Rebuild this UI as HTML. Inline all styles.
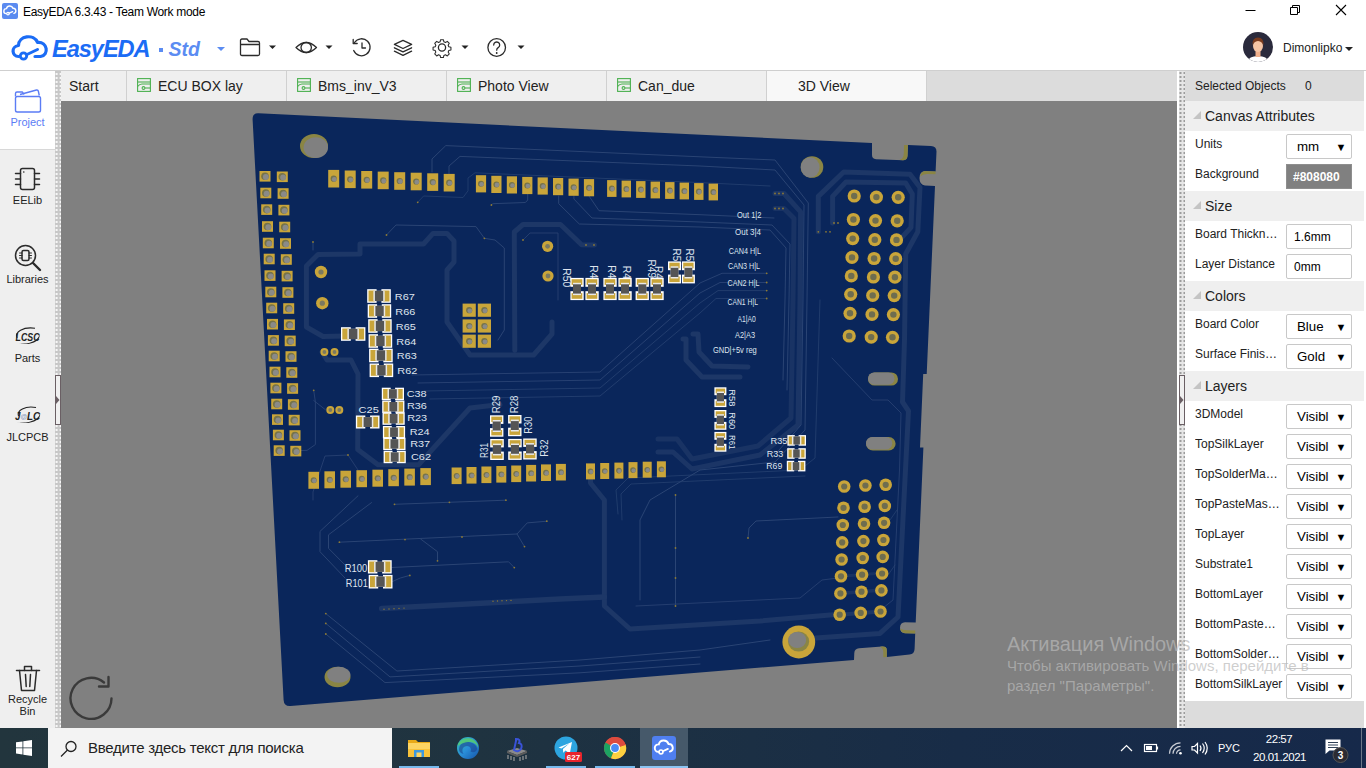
<!DOCTYPE html>
<html lang="en"><head><meta charset="utf-8"><title>EasyEDA 6.3.43 - Team Work mode</title>
<style>
*{box-sizing:border-box}
html,body{margin:0;padding:0}
body{width:1366px;height:768px;overflow:hidden;position:relative;background:#fff;font-family:"Liberation Sans",sans-serif;font-size:12px;color:#222}
.abs{position:absolute}
#title{left:0;top:0;width:1366px;height:22px;background:#fff}
#title .t{left:23px;top:5px;font-size:12px;color:#000;white-space:nowrap;letter-spacing:-0.31px}
#toolbar{left:0;top:22px;width:1366px;height:48px;background:#fff}
#tbline{left:0;top:70px;width:1366px;height:1px;background:#cfcfcf}
#left{left:0;top:71px;width:55px;height:657px;background:#efefef}
#left .sel{left:0;top:0;width:55px;height:79px;background:#fff;border-bottom:1px solid #d8d8d8}
#left .lbl{width:55px;left:0;text-align:center;font-size:11px;color:#222;line-height:12px}
.splitL{background-color:#c8c8c8;background-image:radial-gradient(circle,#f6f6f6 0.9px,transparent 1.2px);background-size:4px 4px;background-position:-0.4px 1px}
.splitR{background-color:#e6e6e6;background-image:radial-gradient(circle,#9c9c9c 0.9px,transparent 1.2px);background-size:4px 4px;background-position:-0.5px 0px}
#tabs{left:61px;top:71px;width:1116px;height:30px;background:#dcdcdc}
.tab{position:absolute;top:0;height:30px;background:#efefef;border-right:1px solid #d0d0d0;font-size:14px;color:#222;line-height:31px;white-space:nowrap}
.tab.act{background:#f8f8f8}
#canvas{left:61px;top:101px;width:1116px;height:627px;background:#808080;overflow:hidden}
#right{left:1185px;top:71px;width:181px;height:657px;background:#dcdcdc}
.hdr{position:absolute;left:0;width:179px;height:30px;background:#efefef;font-size:14px;color:#222;line-height:30px;padding-left:20px}
.hdr:before{content:"";position:absolute;left:8px;top:10px;border-left:0 solid transparent;border-bottom:8px solid #c4c4c4;border-left:8px solid transparent}
.row{position:absolute;left:0;width:179px;height:30px;background:#fff}
.row .k{position:absolute;left:10px;top:6px;font-size:12px;color:#222;white-space:nowrap;width:90px;overflow:hidden}
.row .v{position:absolute;left:101px;top:3px;width:66px;height:25px;border:1px solid #c8c8c8;border-radius:2px;background:#fff;font-size:13.3px;color:#000;line-height:24px;padding-left:10px;white-space:nowrap}
.row .v.in{font-size:12px;padding-left:7px}
.row .v .ar{position:absolute;right:4.5px;top:0;font-size:11px}
#taskbar{left:0;top:728px;width:1366px;height:40px;background:linear-gradient(90deg,#22353d 0%,#1f3340 35%,#182c47 70%,#16294a 100%)}
</style></head><body>
<div id="title" class="abs">
<svg class="abs" style="left:2px;top:3px" width="16" height="16" viewBox="0 0 16 16"><rect x="0" y="0" width="16" height="16" rx="2" fill="#5b8bf0"/><path d="M4.2 10.6a2.5 2.5 0 0 1 .3-5 3.4 3.4 0 0 1 6.5-.3 2.6 2.6 0 0 1 .9 5.1" fill="none" stroke="#fff" stroke-width="1.4" stroke-linecap="round"/><circle cx="6" cy="10.6" r="1.3" fill="none" stroke="#fff" stroke-width="1.2"/><path d="M7.2 10.2L10.6 8.6" stroke="#fff" stroke-width="1.3" stroke-linecap="round"/></svg>
<div class="abs t">EasyEDA 6.3.43 - Team Work mode</div>
<svg class="abs" style="left:1230px;top:0" width="136" height="22" viewBox="0 0 136 22"><path d="M15.5 10.5h10" stroke="#000" stroke-width="1"/><path d="M60.5 7.5h7v7h-7z M62.500 7.500v-2h7v7h-2" fill="none" stroke="#000" stroke-width="1"/><path d="M106 5l10 10M116 5l-10 10" stroke="#000" stroke-width="1.1"/></svg>
</div>
<div id="toolbar" class="abs">
<svg class="abs" style="left:8px;top:10px" width="44" height="32" viewBox="0 0 44 32"><path d="M10.500 24.500 C4 24.500 2.500 14.500 10.500 13.500 C10.500 3.500 26 1.500 29.500 10.500 C39.500 9.500 41.500 23 32.500 24.500 L27 24.500" fill="none" stroke="#1b6cf5" stroke-width="3.200" stroke-linecap="round" stroke-linejoin="round"/><circle cx="15.500" cy="24" r="3.200" fill="none" stroke="#1b6cf5" stroke-width="2.800"/><path d="M19 22.500 L29.500 17.500" stroke="#1b6cf5" stroke-width="3" stroke-linecap="round"/></svg>
<div class="abs" style="left:52px;top:13px;font-size:23.6px;line-height:28px;font-weight:bold;font-style:italic;color:#1b6cf5;letter-spacing:-1.05px;white-space:nowrap">EasyEDA</div>
<div class="abs" style="left:157px;top:15px;font-size:19.5px;line-height:24px;font-weight:bold;font-style:italic;color:#5b8cf2;white-space:nowrap"><span style="display:inline-block;width:3.5px;height:3.5px;background:#5b8cf2;vertical-align:middle;margin:0 6px 2px 2px"></span>Std</div>
<svg class="abs" style="left:216px;top:24px" width="10" height="6"><path d="M1 1h8l-4 4z" fill="#5b8cf2"/></svg>
<svg class="abs" style="left:236px;top:10px" width="300" height="32" viewBox="0 0 300 32" fill="none" stroke="#2b2b2b" stroke-width="1.300" stroke-linejoin="round" stroke-linecap="round"><path d="M4.500 8.500 q0-1.500 1.500-1.500 h5 l2 2.500 h9 q1.500 0 1.500 1.500 v11 q0 1.500-1.500 1.500 h-16 q-1.500 0-1.500-1.500z M4.500 12.500h19"/><path d="M33 13.500h7l-3.500 3.500z" fill="#222" stroke="none"/><path d="M60 15.500 q10.200-10 20.500 0 q-10.300 10-20.500 0z"/><ellipse cx="70.200" cy="15.500" rx="5.200" ry="5"/><path d="M89.500 13.500h7l-3.500 3.500z" fill="#222" stroke="none"/><path d="M118.500 10.500 a8.500 8.500 0 1 1 -0.800 8"/><path d="M117.200 7.500v4h4" /><path d="M126 11v5h3.500"/><path d="M167 8.300l8.600 4.100-8.600 4.100-8.600-4.100z"/><path d="M158.400 15.800l8.600 4.100 8.600-4.100"/><path d="M158.400 19.200l8.600 4.100 8.600-4.100"/><circle cx="206" cy="15.500" r="3.600"/><path d="M204.300 6.500h3.400l.6 2.600 1.900.8 2.300-1.400 2.400 2.400-1.400 2.300.8 1.900 2.600.6v3.400l-2.600.6-.8 1.900 1.400 2.300-2.400 2.400-2.300-1.400-1.900.8-.6 2.600h-3.400l-.6-2.600-1.900-.8-2.300 1.400-2.400-2.400 1.400-2.300-.8-1.900-2.600-.6v-3.400l2.600-.6.800-1.900-1.400-2.300 2.400-2.400 2.300 1.400 1.900-.8z" transform="translate(206 15.500) scale(.82) translate(-206 -16)"/><path d="M225.500 13.500h7l-3.500 3.500z" fill="#222" stroke="none"/><circle cx="260.700" cy="15.500" r="8.800"/><path d="M257.700 13 a3 3 0 1 1 4.500 2.600 q-1.500.9-1.500 2.600"/><circle cx="260.700" cy="21" r=".9" fill="#222" stroke="none"/><path d="M281.500 13.500h7l-3.500 3.500z" fill="#222" stroke="none"/></svg>
<svg class="abs" style="left:1242px;top:8.500px" width="32" height="32" viewBox="0 0 32 32"><defs><clipPath id="av"><circle cx="16" cy="16" r="15"/></clipPath></defs><circle cx="16" cy="16" r="15" fill="#2a2a3c"/><g clip-path="url(#av)"><path d="M5 32 q1-7 11-7 q10 0 11 7z" fill="#fff"/><rect x="13.500" y="19" width="5" height="7" fill="#f0b08c"/><ellipse cx="16" cy="15" rx="5" ry="6" fill="#f5c4a4"/><path d="M10.500 14.500 q-.5-8 5.500-8 q6 0 5.500 8 q-1-4-5.500-4.500 q-4.500.5-5.500 4.500z" fill="#7a3b1e"/></g></svg>
<div class="abs" style="left:1283px;top:19px;font-size:12px;color:#222;white-space:nowrap">Dimonlipko</div>
<svg class="abs" style="left:1344px;top:24px" width="10" height="6"><path d="M1 1h8l-4 4z" fill="#222"/></svg>
</div>
<div id="tbline" class="abs"></div>
<div id="left" class="abs">
<div class="abs sel"></div>
<svg class="abs" style="left:12px;top:15px" width="32" height="30" viewBox="0 0 32 30" fill="none" stroke="#5b7cf5" stroke-width="1.400" stroke-linejoin="round"><path d="M3.500 10.500v-3q0-1.500 1.500-1.500h5.500l1.500 2.500"/><path d="M8 8.500l16.500-4.500q1.500-.3 1.800 1l1 4.500"/><rect x="3.500" y="10.500" width="25" height="15.500" rx="1.800"/></svg>
<div class="abs lbl" style="top:45px;color:#5b7cf5">Project</div>
<svg class="abs" style="left:12px;top:95px" width="32" height="28" viewBox="0 0 32 28" fill="none" stroke="#2b2b2b" stroke-width="1.500" stroke-linecap="round"><rect x="8.500" y="2.500" width="14" height="21" rx="2"/><path d="M3.500 7.500h5M3.500 13h5M3.500 18.500h5M22.500 7.500h5M22.500 13h5M22.500 18.500h5"/><circle cx="11.800" cy="6" r=".8" fill="#222" stroke="none"/></svg>
<div class="abs lbl" style="top:123px">EELib</div>
<svg class="abs" style="left:12px;top:172px" width="32" height="30" viewBox="0 0 32 30" fill="none" stroke="#2b2b2b" stroke-width="1.500" stroke-linecap="round"><circle cx="13.500" cy="12.500" r="10"/><path d="M21 20l7 7" stroke-width="2.400"/><rect x="10" y="7.500" width="7" height="10" rx="1.500"/><path d="M7.500 10h2.500M7.500 12.500h2.500M7.500 15h2.500M17 10h2.500M17 12.500h2.500M17 15h2.500" stroke-width="1"/></svg>
<div class="abs lbl" style="top:202px">Libraries</div>
<svg class="abs" style="left:13px;top:254px" width="30" height="24" viewBox="0 0 30 24"><path d="M4 13 C1.500 7 10 1.500 22 3.200" fill="none" stroke="#222" stroke-width="1.100"/><path d="M26.500 9.500 C28 16 17 21.500 4.500 18 C15 20.200 25 16 26.500 9.500z" fill="#222"/><text x="2.500" y="15.600" font-family="Liberation Sans, sans-serif" font-size="10.500" font-weight="bold" font-style="italic" fill="#222" textLength="24" lengthAdjust="spacingAndGlyphs">LCSC</text></svg>
<div class="abs lbl" style="top:281px">Parts</div>
<svg class="abs" style="left:13px;top:333px" width="30" height="24" viewBox="0 0 30 24"><path d="M5.500 12 C3.500 6.500 12 1.500 23 3.500" fill="none" stroke="#222" stroke-width="1.100"/><path d="M27 9.500 C28.500 16 17 21.500 3.500 18 C15 20.200 25.500 16 27 9.500z" fill="#222"/><text x="2" y="16" font-family="Liberation Sans, sans-serif" font-size="11" font-weight="bold" font-style="italic" fill="#222" textLength="25" lengthAdjust="spacingAndGlyphs">J<tspan fill="#8a9cc0" font-size="7.500" dy="-1">@</tspan><tspan dy="1">LC</tspan></text></svg>
<div class="abs lbl" style="top:360px">JLCPCB</div>
<svg class="abs" style="left:14px;top:592px" width="28" height="30" viewBox="0 0 28 30" fill="none" stroke="#2b2b2b" stroke-width="1.500" stroke-linecap="round" stroke-linejoin="round"><path d="M2.500 7.500h23"/><path d="M10.500 7.500v-4h7v4"/><path d="M5.500 7.500l2 20h13l2-20"/><path d="M11.500 11.500l.7 12M16.500 11.500l-.7 12"/></svg>
<div class="abs lbl" style="top:622px">Recycle</div>
<div class="abs lbl" style="top:634px">Bin</div>
</div>
<div class="abs splitL" style="left:55px;top:71px;width:6px;height:657px"></div>
<div class="abs" style="left:55px;top:375px;width:6px;height:50px;background:#f0f0f0;border:1px solid #6a5f64"></div>
<svg class="abs" style="left:56px;top:395px" width="4" height="10"><path d="M0 1l3.500 4-3.500 4z" fill="#6a5f64"/></svg>
<div id="tabs" class="abs">
<div class="tab" style="left:0px;width:66px"><span style="position:absolute;left:8px">Start</span></div>
<div class="tab" style="left:66px;width:160px"><svg style="position:absolute;left:10px;top:7px" width="14" height="14" viewBox="0 0 14 14" fill="none" stroke="#4bb04f" stroke-width="1.100"><rect x=".6" y=".6" width="12.800" height="12.800"/><path d="M.6 4h12.800"/><path d="M.6 8.500q2.500-3 5-2.500h7.800"/><circle cx="6.500" cy="10" r="1.400"/><path d="M8 10h5.400"/></svg><span style="position:absolute;left:31px">ECU BOX lay</span></div>
<div class="tab" style="left:226px;width:160px"><svg style="position:absolute;left:10px;top:7px" width="14" height="14" viewBox="0 0 14 14" fill="none" stroke="#4bb04f" stroke-width="1.100"><rect x=".6" y=".6" width="12.800" height="12.800"/><path d="M.6 4h12.800"/><path d="M.6 8.500q2.500-3 5-2.500h7.800"/><circle cx="6.500" cy="10" r="1.400"/><path d="M8 10h5.400"/></svg><span style="position:absolute;left:31px">Bms_inv_V3</span></div>
<div class="tab" style="left:386px;width:160px"><svg style="position:absolute;left:10px;top:7px" width="14" height="14" viewBox="0 0 14 14" fill="none" stroke="#4bb04f" stroke-width="1.100"><rect x=".6" y=".6" width="12.800" height="12.800"/><path d="M.6 4h12.800"/><path d="M.6 8.500q2.500-3 5-2.500h7.800"/><circle cx="6.500" cy="10" r="1.400"/><path d="M8 10h5.400"/></svg><span style="position:absolute;left:31px">Photo View</span></div>
<div class="tab" style="left:546px;width:160px"><svg style="position:absolute;left:10px;top:7px" width="14" height="14" viewBox="0 0 14 14" fill="none" stroke="#4bb04f" stroke-width="1.100"><rect x=".6" y=".6" width="12.800" height="12.800"/><path d="M.6 4h12.800"/><path d="M.6 8.500q2.500-3 5-2.500h7.800"/><circle cx="6.500" cy="10" r="1.400"/><path d="M8 10h5.400"/></svg><span style="position:absolute;left:31px">Can_due</span></div>
<div class="tab act" style="left:706px;width:160px"><span style="position:absolute;left:31px">3D View</span></div>
</div>
<div id="canvas" class="abs">
<svg class="abs" style="left:0;top:0" width="1116" height="627" viewBox="61 101 1116 627" font-family="Liberation Sans, sans-serif">
<path d="M258.5 113.3 L872 143 L872 155 Q872 159 876 159.2 L903 160.3 Q907 160.3 907.5 156 L908 145 L931 146 Q936.5 146.3 936.5 151.5 L935.6 171.5 L925 171 Q919.5 171.5 919.5 178 Q919.5 185 925 185.5 L935 186 L926.7 374 L923.2 374 L920 447.5 L923.4 447.5 L915.7 622.5 L905 622.3 Q900 622.5 900 627.8 Q900 633 905 633.2 L915.2 633.4 L914.6 649 Q914.4 654 909.5 654.6 L886.8 656.9 L886.8 650 Q886.8 646.3 882 646.6 L859 648.2 Q854.5 648.6 854.3 653 L854 660 L290.5 706 Q284 706.5 283.6 700 L252.6 119.5 Q252.4 113 258.5 113.3 Z" fill="#0a265b"/>
<path d="M500 404.5 L470 408 L433.8 447.8 L418.6 464.8 L378 464.8 L357.7 449.5 L358 374 L351 360 L327 360 L322 352" fill="none" stroke="#1d3767" stroke-width="5" stroke-linejoin="round" stroke-linecap="round"/>
<path d="M345 336 L323 336.5 L306.4 327 L306.4 266 L318 254.5 L360 254 L360 244 L423.5 244 L433 233.4 L447 233.4 L454 241 L454 262 L447 270 L447 322 L470 355 L533.6 355 L552 334 L552 322" fill="none" stroke="#1d3767" stroke-width="5" stroke-linejoin="round" stroke-linecap="round"/>
<path d="M514.8 350.5 L514.3 232 L523 224.5 L560.5 224.5 L581.6 244.7 L594.5 245" fill="none" stroke="#1d3767" stroke-width="5" stroke-linejoin="round" stroke-linecap="round"/>
<path d="M818.3 231.8 L818.3 196.4 L843.7 172 L910 174.2 L920 187.5 L917.8 231.8 L905.7 254 L904.5 340 L902.5 402 L908.5 411 L907 440 L898 617 L880 633.4 L815.5 638" fill="none" stroke="#1d3767" stroke-width="5" stroke-linejoin="round" stroke-linecap="round"/>
<path d="M832.6 223 L832.6 196.4 L846 182 L905.7 183 L912.3 194 L911 227.3 L901 238.4" fill="none" stroke="#1d3767" stroke-width="5" stroke-linejoin="round" stroke-linecap="round"/>
<path d="M775 193.5 L784 193.5 L800.6 211.9 L800 300 L798 425 L760 455 L692 469 L673 452 L658 452" fill="none" stroke="#1d3767" stroke-width="5" stroke-linejoin="round" stroke-linecap="round" opacity="0.9"/>
<path d="M775 208.5 L784 208.5 L794 218.5 L793 300 L791 418 L758 446 L692 459 L677 439 L658 439" fill="none" stroke="#1d3767" stroke-width="5" stroke-linejoin="round" stroke-linecap="round" opacity="0.8"/>
<path d="M683 339 L686 339 L686 360 L702 377 L740 377" fill="none" stroke="#1d3767" stroke-width="5" stroke-linejoin="round" stroke-linecap="round"/>
<path d="M693 334 L698 334 L699 352 L712 366 L748 367" fill="none" stroke="#1d3767" stroke-width="5" stroke-linejoin="round" stroke-linecap="round"/>
<path d="M590.5 478 L590.5 483 L604.4 500 L604.4 606 L630 629 L760 621 L833 614.7" fill="none" stroke="#1d3767" stroke-width="5" stroke-linejoin="round" stroke-linecap="round"/>
<path d="M604.4 597 L560 599 L381.7 608.5" fill="none" stroke="#1d3767" stroke-width="5.5" stroke-linejoin="round" stroke-linecap="round"/>
<path d="M839.7 614.7 L880.5 611.5" fill="none" stroke="#1d3767" stroke-width="4" stroke-linejoin="round" stroke-linecap="round"/>
<path d="M840.3 593.4 L881 590" fill="none" stroke="#1d3767" stroke-width="3.5" stroke-linejoin="round" stroke-linecap="round" opacity="0.8"/>
<path d="M841 576.3 L882 573" fill="none" stroke="#1d3767" stroke-width="3" stroke-linejoin="round" stroke-linecap="round" opacity="0.7"/>
<path d="M432 172 L432 159 L445.8 145.6 L700 156.8 L775 160 L808.3 203 L807 300 L805 430 L775 462 L700 470 L650 500 L640 520 L640 600" fill="none" stroke="#2a4474" stroke-width="1" stroke-linejoin="round" stroke-linecap="round"/>
<path d="M449 175 L449 166 L460 156.4 L700 166 L775 170 L804 205 L803 300 L801 425 L772 458" fill="none" stroke="#2a4474" stroke-width="1" stroke-linejoin="round" stroke-linecap="round"/>
<path d="M417.7 202.3 L423.6 196 L463 197.5 L468 190.8 L468 178 L475 172.8 L700 182.6 L770 186" fill="none" stroke="#2a4474" stroke-width="1" stroke-linejoin="round" stroke-linecap="round" opacity="0.7"/>
<path d="M527.7 194 L527.7 200 L525.4 202.5 L492.6 203.7 L491.4 205" fill="none" stroke="#2a4474" stroke-width="1" stroke-linejoin="round" stroke-linecap="round"/>
<path d="M558.7 196 L558.7 203.7 L579.3 224 L700 227 L770 230 L786 248 L785 300 L783 380" fill="none" stroke="#2a4474" stroke-width="1" stroke-linejoin="round" stroke-linecap="round"/>
<path d="M573.9 196 L573.9 199 L592 218 L700 222 L772 225 L790 244 L789 300 L787 390" fill="none" stroke="#2a4474" stroke-width="1" stroke-linejoin="round" stroke-linecap="round"/>
<path d="M589 196 L599 210.7 L700 214.7 L774 218" fill="none" stroke="#2a4474" stroke-width="1" stroke-linejoin="round" stroke-linecap="round"/>
<path d="M386.5 235 L396 225 L476 226.6 L484.4 238.3 L495 240 L504.3 248 L504.3 330 L498 340" fill="none" stroke="#2a4474" stroke-width="1" stroke-linejoin="round" stroke-linecap="round"/>
<path d="M523 240 L530 233 L558 233 L558 300" fill="none" stroke="#2a4474" stroke-width="1" stroke-linejoin="round" stroke-linecap="round" opacity="0.8"/>
<path d="M313 242 L313 250" fill="none" stroke="#2a4474" stroke-width="1" stroke-linejoin="round" stroke-linecap="round"/>
<path d="M412 375 L600 372 L700 283 L722 273.3 L766.7 273.3" fill="none" stroke="#2a4474" stroke-width="1" stroke-linejoin="round" stroke-linecap="round" opacity="0.9"/>
<path d="M418 383 L600 380 L700 293 L720 282.5 L766.7 282.5" fill="none" stroke="#2a4474" stroke-width="1" stroke-linejoin="round" stroke-linecap="round" opacity="0.9"/>
<path d="M424 391 L600 388 L700 303 L718 290.6 L766.7 290.6" fill="none" stroke="#2a4474" stroke-width="1" stroke-linejoin="round" stroke-linecap="round" opacity="0.75"/>
<path d="M430 399 L600 396 L700 313 L716 298.5 L766.7 298.5" fill="none" stroke="#2a4474" stroke-width="1" stroke-linejoin="round" stroke-linecap="round" opacity="0.75"/>
<path d="M394.5 504.3 L505.9 500.2" fill="none" stroke="#2a4474" stroke-width="1" stroke-linejoin="round" stroke-linecap="round"/>
<path d="M339.4 542.2 L517 534 L527.2 522.9 L546.8 521.2" fill="none" stroke="#2a4474" stroke-width="1" stroke-linejoin="round" stroke-linecap="round"/>
<path d="M517 534 L524.5 546.6" fill="none" stroke="#2a4474" stroke-width="1" stroke-linejoin="round" stroke-linecap="round"/>
<path d="M420.6 539 L437.5 551.7 L437.5 560.8" fill="none" stroke="#2a4474" stroke-width="1" stroke-linejoin="round" stroke-linecap="round"/>
<path d="M392 567.5 L508.6 561.8 L514.3 567.6" fill="none" stroke="#2a4474" stroke-width="1" stroke-linejoin="round" stroke-linecap="round"/>
<path d="M392.5 581.5 L400.3 578 L409.8 575.4" fill="none" stroke="#2a4474" stroke-width="1" stroke-linejoin="round" stroke-linecap="round"/>
<path d="M325.8 613.6 L396.9 671 L580 660 L700 650 L770 640" fill="none" stroke="#2a4474" stroke-width="1" stroke-linejoin="round" stroke-linecap="round"/>
<path d="M325.8 623.4 L390 676.9 L580 666 L700 657" fill="none" stroke="#2a4474" stroke-width="1" stroke-linejoin="round" stroke-linecap="round"/>
<path d="M325.8 634 L385 682.6 L580 672.8 L700 664" fill="none" stroke="#2a4474" stroke-width="1" stroke-linejoin="round" stroke-linecap="round"/>
<path d="M358 495.8 L320 531.4 L320 551.7 L345 578" fill="none" stroke="#2a4474" stroke-width="1" stroke-linejoin="round" stroke-linecap="round"/>
<path d="M371.5 502.6 L328.5 534.8 L328.5 548.3 L350 570" fill="none" stroke="#2a4474" stroke-width="1" stroke-linejoin="round" stroke-linecap="round"/>
<path d="M675.5 495 L675.5 606" fill="none" stroke="#2a4474" stroke-width="1" stroke-linejoin="round" stroke-linecap="round"/>
<path d="M748 538 L749 528 L756 521 L838 517" fill="none" stroke="#2a4474" stroke-width="1" stroke-linejoin="round" stroke-linecap="round"/>
<path d="M618 514 L616 490 L628 478 L800 470 L815 458 L820 300" fill="none" stroke="#2a4474" stroke-width="1" stroke-linejoin="round" stroke-linecap="round" opacity="0.7"/>
<path d="M622 520 L621 494 L631 484 L805 476" fill="none" stroke="#2a4474" stroke-width="1" stroke-linejoin="round" stroke-linecap="round" opacity="0.7"/>
<path d="M636 606 L800 598 L822 580 L838 578" fill="none" stroke="#2a4474" stroke-width="1" stroke-linejoin="round" stroke-linecap="round" opacity="0.8"/>
<path d="M296 450.6 L307 450.4 L315.4 444.5 L315.4 402 L313.7 390.3" fill="none" stroke="#2a4474" stroke-width="1" stroke-linejoin="round" stroke-linecap="round" opacity="0.9"/>
<path d="M313.7 400.5 L325.5 409.8" fill="none" stroke="#2a4474" stroke-width="1" stroke-linejoin="round" stroke-linecap="round" opacity="0.9"/>
<path d="M313 500 L313 492 L325 456 L348 455 L358 470" fill="none" stroke="#2a4474" stroke-width="1" stroke-linejoin="round" stroke-linecap="round" opacity="0.8"/>
<path d="M832 358 L872 400 L888 400 L901 413 L899.5 470 L893 600 L878 612" fill="none" stroke="#2a4474" stroke-width="1" stroke-linejoin="round" stroke-linecap="round" opacity="0.8"/>
<path d="M897 510 L890 520 L884 523" fill="none" stroke="#2a4474" stroke-width="1" stroke-linejoin="round" stroke-linecap="round" opacity="0.7"/>
<path d="M895 565 L888 575 L882 577" fill="none" stroke="#2a4474" stroke-width="1" stroke-linejoin="round" stroke-linecap="round" opacity="0.7"/>
<circle cx="313.7" cy="390.3" r="0.9" fill="#8d7a35"/><circle cx="348.0" cy="455.0" r="0.9" fill="#8d7a35"/><circle cx="417.7" cy="202.3" r="0.9" fill="#8d7a35"/><circle cx="386.5" cy="235.0" r="0.9" fill="#8d7a35"/><circle cx="491.4" cy="205.0" r="0.9" fill="#8d7a35"/><circle cx="586.0" cy="245.0" r="0.9" fill="#8d7a35"/><circle cx="594.0" cy="245.0" r="0.9" fill="#8d7a35"/><circle cx="484.4" cy="238.3" r="0.9" fill="#8d7a35"/><circle cx="523.0" cy="240.0" r="0.9" fill="#8d7a35"/><circle cx="313.0" cy="242.0" r="0.9" fill="#8d7a35"/><circle cx="394.5" cy="504.3" r="0.9" fill="#8d7a35"/><circle cx="449.4" cy="502.3" r="0.9" fill="#8d7a35"/><circle cx="505.9" cy="500.2" r="0.9" fill="#8d7a35"/><circle cx="339.4" cy="542.2" r="0.9" fill="#8d7a35"/><circle cx="405.0" cy="539.6" r="0.9" fill="#8d7a35"/><circle cx="462.0" cy="537.0" r="0.9" fill="#8d7a35"/><circle cx="546.8" cy="521.2" r="0.9" fill="#8d7a35"/><circle cx="524.5" cy="546.6" r="0.9" fill="#8d7a35"/><circle cx="437.5" cy="560.8" r="0.9" fill="#8d7a35"/><circle cx="514.3" cy="567.6" r="0.9" fill="#8d7a35"/><circle cx="409.8" cy="575.4" r="0.9" fill="#8d7a35"/><circle cx="325.8" cy="613.6" r="0.9" fill="#8d7a35"/><circle cx="325.8" cy="623.4" r="0.9" fill="#8d7a35"/><circle cx="325.8" cy="634.0" r="0.9" fill="#8d7a35"/><circle cx="766.7" cy="273.3" r="0.9" fill="#8d7a35"/><circle cx="766.7" cy="282.5" r="0.9" fill="#8d7a35"/><circle cx="766.7" cy="290.6" r="0.9" fill="#8d7a35"/><circle cx="766.7" cy="298.5" r="0.9" fill="#8d7a35"/><circle cx="675.5" cy="495.0" r="0.9" fill="#8d7a35"/><circle cx="675.5" cy="548.0" r="0.9" fill="#8d7a35"/><circle cx="675.5" cy="578.0" r="0.9" fill="#8d7a35"/><circle cx="675.5" cy="606.0" r="0.9" fill="#8d7a35"/><circle cx="748.0" cy="538.0" r="0.9" fill="#8d7a35"/><circle cx="775.0" cy="193.5" r="0.9" fill="#8d7a35"/><circle cx="779.0" cy="193.5" r="0.9" fill="#8d7a35"/><circle cx="783.0" cy="193.5" r="0.9" fill="#8d7a35"/><circle cx="775.0" cy="208.5" r="0.9" fill="#8d7a35"/><circle cx="779.0" cy="208.5" r="0.9" fill="#8d7a35"/><circle cx="783.0" cy="208.5" r="0.9" fill="#8d7a35"/><circle cx="826.0" cy="231.8" r="0.9" fill="#8d7a35"/><circle cx="830.0" cy="231.8" r="0.9" fill="#8d7a35"/><circle cx="834.0" cy="223.0" r="0.9" fill="#8d7a35"/><circle cx="838.0" cy="223.0" r="0.9" fill="#8d7a35"/><circle cx="818.3" cy="231.8" r="0.9" fill="#8d7a35"/>
<circle cx="384.0" cy="609.3" r="0.7" fill="#8d7a35"/><circle cx="389.0" cy="609.0" r="0.7" fill="#8d7a35"/><circle cx="394.0" cy="608.7" r="0.7" fill="#8d7a35"/><circle cx="399.0" cy="608.4" r="0.7" fill="#8d7a35"/><circle cx="404.0" cy="608.1" r="0.7" fill="#8d7a35"/><circle cx="493.0" cy="601.2" r="0.7" fill="#8d7a35"/><circle cx="497.5" cy="601.0" r="0.7" fill="#8d7a35"/><circle cx="502.0" cy="600.8" r="0.7" fill="#8d7a35"/><circle cx="506.5" cy="600.6" r="0.7" fill="#8d7a35"/><circle cx="511.0" cy="600.4" r="0.7" fill="#8d7a35"/>
<path d="M904 145 L908 145 L907.5 156 Q907 160.3 903 160.3 L899.5 160.1 Q903.8 158.5 903.8 153 Z" fill="#8a8544"/>
<path d="M925 171 L935.6 171.5 L935.5 174.2 L927 173.9 Q922.5 174 920.3 176.5 Q920.8 171.2 925 171Z" fill="#8a8544"/>
<path d="M905 633.2 L915.2 633.4 L915.3 630.4 L907 630.2 Q902.5 630 900.3 628.5 Q901 633 905 633.2Z" fill="#8a8544"/>
<path d="M886.8 656.9 L886.8 650 Q886.8 646.3 882 646.6 L880 646.8 Q883.3 648.5 883.3 652 L883.3 657.2Z" fill="#8a8544"/>
<ellipse cx="314" cy="146" rx="14" ry="12" fill="#8a8544"/>
<ellipse cx="315.8" cy="147.6" rx="12.2" ry="10.3" fill="#808080"/>
<ellipse cx="812" cy="167" rx="11.3" ry="10.8" fill="#8a8544"/>
<ellipse cx="810.2" cy="167.4" rx="9.4" ry="10.2" fill="#808080"/>
<ellipse cx="337.5" cy="677" rx="13" ry="10.3" fill="#8a8544"/>
<ellipse cx="338.8" cy="674.8" rx="11.6" ry="8" fill="#808080"/>
<rect x="868" y="372.4" width="30" height="13.2" rx="6.6" fill="#8a8544"/>
<rect x="868" y="372.4" width="26.5" height="12.4" rx="6.2" fill="#808080"/>
<rect x="866" y="437" width="29.6" height="13.6" rx="6.8" fill="#8a8544"/>
<rect x="866" y="437" width="26.2" height="12.6" rx="6.3" fill="#808080"/>
<circle cx="798.8" cy="642" r="16.4" fill="#c9a53a"/>
<ellipse cx="798.6" cy="641.6" rx="10.6" ry="10" fill="#8a8544"/>
<ellipse cx="797.2" cy="640" rx="9" ry="8" fill="#808080"/>
<rect x="259.5" y="171" width="11" height="10.6" fill="#c9a53a"/><circle cx="265" cy="176.3" r="3.8" fill="#75734a"/><circle cx="265.8" cy="177" r="2.9" fill="#8a8a88"/>
<rect x="276.8" y="171.5" width="11" height="10.6" fill="#c9a53a"/><circle cx="282.3" cy="176.8" r="3.8" fill="#75734a"/><circle cx="283.1" cy="177.5" r="2.9" fill="#8a8a88"/>
<rect x="260.3" y="187.7" width="11" height="10.6" fill="#c9a53a"/><circle cx="265.8" cy="193" r="3.8" fill="#75734a"/><circle cx="266.6" cy="193.7" r="2.9" fill="#8a8a88"/>
<rect x="277.6" y="188.2" width="11" height="10.6" fill="#c9a53a"/><circle cx="283.1" cy="193.5" r="3.8" fill="#75734a"/><circle cx="283.9" cy="194.2" r="2.9" fill="#8a8a88"/>
<rect x="261.2" y="204.3" width="11" height="10.6" fill="#c9a53a"/><circle cx="266.7" cy="209.6" r="3.8" fill="#75734a"/><circle cx="267.4" cy="210.3" r="2.9" fill="#8a8a88"/>
<rect x="278.4" y="204.8" width="11" height="10.6" fill="#c9a53a"/><circle cx="283.9" cy="210.1" r="3.8" fill="#75734a"/><circle cx="284.6" cy="210.8" r="2.9" fill="#8a8a88"/>
<rect x="262" y="221.2" width="11" height="10.6" fill="#c9a53a"/><circle cx="267.5" cy="226.5" r="3.8" fill="#75734a"/><circle cx="268.3" cy="227.2" r="2.9" fill="#8a8a88"/>
<rect x="279.2" y="221.7" width="11" height="10.6" fill="#c9a53a"/><circle cx="284.7" cy="227" r="3.8" fill="#75734a"/><circle cx="285.4" cy="227.7" r="2.9" fill="#8a8a88"/>
<rect x="262.8" y="237.7" width="11" height="10.6" fill="#c9a53a"/><circle cx="268.3" cy="243" r="3.8" fill="#75734a"/><circle cx="269.1" cy="243.7" r="2.9" fill="#8a8a88"/>
<rect x="280" y="238.2" width="11" height="10.6" fill="#c9a53a"/><circle cx="285.5" cy="243.5" r="3.8" fill="#75734a"/><circle cx="286.2" cy="244.2" r="2.9" fill="#8a8a88"/>
<rect x="263.7" y="253.7" width="11" height="10.6" fill="#c9a53a"/><circle cx="269.2" cy="259" r="3.8" fill="#75734a"/><circle cx="269.9" cy="259.7" r="2.9" fill="#8a8a88"/>
<rect x="280.8" y="254.2" width="11" height="10.6" fill="#c9a53a"/><circle cx="286.3" cy="259.5" r="3.8" fill="#75734a"/><circle cx="287" cy="260.2" r="2.9" fill="#8a8a88"/>
<rect x="264.5" y="270.3" width="11" height="10.6" fill="#c9a53a"/><circle cx="270" cy="275.6" r="3.8" fill="#75734a"/><circle cx="270.8" cy="276.3" r="2.9" fill="#8a8a88"/>
<rect x="281.6" y="270.8" width="11" height="10.6" fill="#c9a53a"/><circle cx="287.1" cy="276.1" r="3.8" fill="#75734a"/><circle cx="287.8" cy="276.8" r="2.9" fill="#8a8a88"/>
<rect x="265.3" y="286.7" width="11" height="10.6" fill="#c9a53a"/><circle cx="270.8" cy="292" r="3.8" fill="#75734a"/><circle cx="271.6" cy="292.7" r="2.9" fill="#8a8a88"/>
<rect x="282.4" y="287.2" width="11" height="10.6" fill="#c9a53a"/><circle cx="287.9" cy="292.5" r="3.8" fill="#75734a"/><circle cx="288.6" cy="293.2" r="2.9" fill="#8a8a88"/>
<rect x="266.2" y="302.7" width="11" height="10.6" fill="#c9a53a"/><circle cx="271.7" cy="308" r="3.8" fill="#75734a"/><circle cx="272.4" cy="308.7" r="2.9" fill="#8a8a88"/>
<rect x="283.2" y="303.2" width="11" height="10.6" fill="#c9a53a"/><circle cx="288.7" cy="308.5" r="3.8" fill="#75734a"/><circle cx="289.4" cy="309.2" r="2.9" fill="#8a8a88"/>
<rect x="267" y="318.9" width="11" height="10.6" fill="#c9a53a"/><circle cx="272.5" cy="324.2" r="3.8" fill="#75734a"/><circle cx="273.3" cy="324.9" r="2.9" fill="#8a8a88"/>
<rect x="283.9" y="319.4" width="11" height="10.6" fill="#c9a53a"/><circle cx="289.4" cy="324.7" r="3.8" fill="#75734a"/><circle cx="290.2" cy="325.4" r="2.9" fill="#8a8a88"/>
<rect x="267.9" y="335.1" width="11" height="10.6" fill="#c9a53a"/><circle cx="273.4" cy="340.4" r="3.8" fill="#75734a"/><circle cx="274.1" cy="341.1" r="2.9" fill="#8a8a88"/>
<rect x="284.7" y="335.6" width="11" height="10.6" fill="#c9a53a"/><circle cx="290.2" cy="340.9" r="3.8" fill="#75734a"/><circle cx="291" cy="341.6" r="2.9" fill="#8a8a88"/>
<rect x="268.7" y="350.7" width="11" height="10.6" fill="#c9a53a"/><circle cx="274.2" cy="356" r="3.8" fill="#75734a"/><circle cx="274.9" cy="356.7" r="2.9" fill="#8a8a88"/>
<rect x="285.5" y="351.2" width="11" height="10.6" fill="#c9a53a"/><circle cx="291" cy="356.5" r="3.8" fill="#75734a"/><circle cx="291.8" cy="357.2" r="2.9" fill="#8a8a88"/>
<rect x="269.5" y="366.7" width="11" height="10.6" fill="#c9a53a"/><circle cx="275" cy="372" r="3.8" fill="#75734a"/><circle cx="275.8" cy="372.7" r="2.9" fill="#8a8a88"/>
<rect x="286.3" y="367.2" width="11" height="10.6" fill="#c9a53a"/><circle cx="291.8" cy="372.5" r="3.8" fill="#75734a"/><circle cx="292.6" cy="373.2" r="2.9" fill="#8a8a88"/>
<rect x="270.4" y="382.7" width="11" height="10.6" fill="#c9a53a"/><circle cx="275.9" cy="388" r="3.8" fill="#75734a"/><circle cx="276.6" cy="388.7" r="2.9" fill="#8a8a88"/>
<rect x="287.1" y="383.2" width="11" height="10.6" fill="#c9a53a"/><circle cx="292.6" cy="388.5" r="3.8" fill="#75734a"/><circle cx="293.4" cy="389.2" r="2.9" fill="#8a8a88"/>
<rect x="271.2" y="398.7" width="11" height="10.6" fill="#c9a53a"/><circle cx="276.7" cy="404" r="3.8" fill="#75734a"/><circle cx="277.5" cy="404.7" r="2.9" fill="#8a8a88"/>
<rect x="287.9" y="399.2" width="11" height="10.6" fill="#c9a53a"/><circle cx="293.4" cy="404.5" r="3.8" fill="#75734a"/><circle cx="294.2" cy="405.2" r="2.9" fill="#8a8a88"/>
<rect x="272" y="414.3" width="11" height="10.6" fill="#c9a53a"/><circle cx="277.5" cy="419.6" r="3.8" fill="#75734a"/><circle cx="278.3" cy="420.3" r="2.9" fill="#8a8a88"/>
<rect x="288.7" y="414.8" width="11" height="10.6" fill="#c9a53a"/><circle cx="294.2" cy="420.1" r="3.8" fill="#75734a"/><circle cx="295" cy="420.8" r="2.9" fill="#8a8a88"/>
<rect x="272.9" y="429.7" width="11" height="10.6" fill="#c9a53a"/><circle cx="278.4" cy="435" r="3.8" fill="#75734a"/><circle cx="279.1" cy="435.7" r="2.9" fill="#8a8a88"/>
<rect x="289.5" y="430.2" width="11" height="10.6" fill="#c9a53a"/><circle cx="295" cy="435.5" r="3.8" fill="#75734a"/><circle cx="295.8" cy="436.2" r="2.9" fill="#8a8a88"/>
<rect x="273.7" y="445.3" width="11" height="10.6" fill="#c9a53a"/><circle cx="279.2" cy="450.6" r="3.8" fill="#75734a"/><circle cx="280" cy="451.3" r="2.9" fill="#8a8a88"/>
<rect x="290.3" y="445.8" width="11" height="10.6" fill="#c9a53a"/><circle cx="295.8" cy="451.1" r="3.8" fill="#75734a"/><circle cx="296.6" cy="451.8" r="2.9" fill="#8a8a88"/>
<rect x="328.2" y="169.9" width="11" height="17.6" fill="#c9a53a"/><circle cx="333.7" cy="178.7" r="3.1" fill="#75734a"/><circle cx="334.3" cy="179.3" r="2.4" fill="#8a8a88"/>
<rect x="344.7" y="170.5" width="11" height="17.6" fill="#c9a53a"/><circle cx="350.2" cy="179.3" r="3.1" fill="#75734a"/><circle cx="350.8" cy="179.8" r="2.4" fill="#8a8a88"/>
<rect x="361.2" y="171" width="11" height="17.6" fill="#c9a53a"/><circle cx="366.7" cy="179.8" r="3.1" fill="#75734a"/><circle cx="367.3" cy="180.4" r="2.4" fill="#8a8a88"/>
<rect x="377.7" y="171.6" width="11" height="17.6" fill="#c9a53a"/><circle cx="383.2" cy="180.4" r="3.1" fill="#75734a"/><circle cx="383.8" cy="181" r="2.4" fill="#8a8a88"/>
<rect x="394.2" y="172.2" width="11" height="17.6" fill="#c9a53a"/><circle cx="399.7" cy="181" r="3.1" fill="#75734a"/><circle cx="400.3" cy="181.5" r="2.4" fill="#8a8a88"/>
<rect x="410.7" y="172.7" width="11" height="17.6" fill="#c9a53a"/><circle cx="416.2" cy="181.5" r="3.1" fill="#75734a"/><circle cx="416.8" cy="182.1" r="2.4" fill="#8a8a88"/>
<rect x="427.2" y="173.3" width="11" height="17.6" fill="#c9a53a"/><circle cx="432.7" cy="182.1" r="3.1" fill="#75734a"/><circle cx="433.3" cy="182.7" r="2.4" fill="#8a8a88"/>
<rect x="443.7" y="173.9" width="11" height="17.6" fill="#c9a53a"/><circle cx="449.2" cy="182.7" r="3.1" fill="#75734a"/><circle cx="449.8" cy="183.2" r="2.4" fill="#8a8a88"/>
<rect x="475.9" y="175.2" width="10.2" height="17.2" fill="#c9a53a"/><circle cx="481" cy="183.8" r="3" fill="#75734a"/><circle cx="481.6" cy="184.3" r="2.3" fill="#8a8a88"/>
<rect x="491.3" y="175.8" width="10.2" height="17.2" fill="#c9a53a"/><circle cx="496.4" cy="184.4" r="3" fill="#75734a"/><circle cx="497" cy="184.9" r="2.3" fill="#8a8a88"/>
<rect x="506.8" y="176.3" width="10.2" height="17.2" fill="#c9a53a"/><circle cx="511.9" cy="184.9" r="3" fill="#75734a"/><circle cx="512.5" cy="185.5" r="2.3" fill="#8a8a88"/>
<rect x="522.2" y="176.9" width="10.2" height="17.2" fill="#c9a53a"/><circle cx="527.3" cy="185.5" r="3" fill="#75734a"/><circle cx="527.9" cy="186" r="2.3" fill="#8a8a88"/>
<rect x="537.6" y="177.4" width="10.2" height="17.2" fill="#c9a53a"/><circle cx="542.7" cy="186" r="3" fill="#75734a"/><circle cx="543.3" cy="186.6" r="2.3" fill="#8a8a88"/>
<rect x="553" y="178" width="10.2" height="17.2" fill="#c9a53a"/><circle cx="558.1" cy="186.6" r="3" fill="#75734a"/><circle cx="558.8" cy="187.1" r="2.3" fill="#8a8a88"/>
<rect x="568.5" y="178.6" width="10.2" height="17.2" fill="#c9a53a"/><circle cx="573.6" cy="187.2" r="3" fill="#75734a"/><circle cx="574.2" cy="187.7" r="2.3" fill="#8a8a88"/>
<rect x="583.9" y="179.1" width="10.2" height="17.2" fill="#c9a53a"/><circle cx="589" cy="187.7" r="3" fill="#75734a"/><circle cx="589.6" cy="188.3" r="2.3" fill="#8a8a88"/>
<rect x="607.1" y="180.1" width="9.4" height="16.8" fill="#c9a53a"/><circle cx="611.8" cy="188.5" r="2.9" fill="#75734a"/><circle cx="612.4" cy="189" r="2.2" fill="#8a8a88"/>
<rect x="621.6" y="180.6" width="9.4" height="16.8" fill="#c9a53a"/><circle cx="626.3" cy="189" r="2.9" fill="#75734a"/><circle cx="626.9" cy="189.5" r="2.2" fill="#8a8a88"/>
<rect x="636.1" y="181.1" width="9.4" height="16.8" fill="#c9a53a"/><circle cx="640.8" cy="189.5" r="2.9" fill="#75734a"/><circle cx="641.4" cy="190" r="2.2" fill="#8a8a88"/>
<rect x="650.6" y="181.6" width="9.4" height="16.8" fill="#c9a53a"/><circle cx="655.3" cy="190" r="2.9" fill="#75734a"/><circle cx="655.9" cy="190.5" r="2.2" fill="#8a8a88"/>
<rect x="665.1" y="182.1" width="9.4" height="16.8" fill="#c9a53a"/><circle cx="669.8" cy="190.5" r="2.9" fill="#75734a"/><circle cx="670.4" cy="191" r="2.2" fill="#8a8a88"/>
<rect x="679.6" y="182.6" width="9.4" height="16.8" fill="#c9a53a"/><circle cx="684.3" cy="191" r="2.9" fill="#75734a"/><circle cx="684.9" cy="191.5" r="2.2" fill="#8a8a88"/>
<rect x="694.1" y="183.1" width="9.4" height="16.8" fill="#c9a53a"/><circle cx="698.8" cy="191.5" r="2.9" fill="#75734a"/><circle cx="699.4" cy="192" r="2.2" fill="#8a8a88"/>
<rect x="708.6" y="183.6" width="9.4" height="16.8" fill="#c9a53a"/><circle cx="713.3" cy="192" r="2.9" fill="#75734a"/><circle cx="713.9" cy="192.5" r="2.2" fill="#8a8a88"/>
<rect x="308.4" y="471.8" width="10.6" height="17" fill="#c9a53a"/><circle cx="313.7" cy="480.3" r="3" fill="#75734a"/><circle cx="314.3" cy="480.8" r="2.3" fill="#8a8a88"/>
<rect x="324.4" y="471.3" width="10.6" height="17" fill="#c9a53a"/><circle cx="329.7" cy="479.8" r="3" fill="#75734a"/><circle cx="330.3" cy="480.3" r="2.3" fill="#8a8a88"/>
<rect x="340.4" y="470.7" width="10.6" height="17" fill="#c9a53a"/><circle cx="345.7" cy="479.2" r="3" fill="#75734a"/><circle cx="346.3" cy="479.8" r="2.3" fill="#8a8a88"/>
<rect x="356.4" y="470.2" width="10.6" height="17" fill="#c9a53a"/><circle cx="361.7" cy="478.7" r="3" fill="#75734a"/><circle cx="362.3" cy="479.3" r="2.3" fill="#8a8a88"/>
<rect x="372.4" y="469.7" width="10.6" height="17" fill="#c9a53a"/><circle cx="377.7" cy="478.2" r="3" fill="#75734a"/><circle cx="378.3" cy="478.7" r="2.3" fill="#8a8a88"/>
<rect x="388.3" y="469.2" width="10.6" height="17" fill="#c9a53a"/><circle cx="393.6" cy="477.7" r="3" fill="#75734a"/><circle cx="394.2" cy="478.2" r="2.3" fill="#8a8a88"/>
<rect x="404.3" y="468.6" width="10.6" height="17" fill="#c9a53a"/><circle cx="409.6" cy="477.1" r="3" fill="#75734a"/><circle cx="410.2" cy="477.7" r="2.3" fill="#8a8a88"/>
<rect x="420.3" y="468.1" width="10.6" height="17" fill="#c9a53a"/><circle cx="425.6" cy="476.6" r="3" fill="#75734a"/><circle cx="426.2" cy="477.1" r="2.3" fill="#8a8a88"/>
<rect x="451.6" y="467.5" width="10" height="16.6" fill="#c9a53a"/><circle cx="456.6" cy="475.8" r="2.9" fill="#75734a"/><circle cx="457.2" cy="476.3" r="2.2" fill="#8a8a88"/>
<rect x="466.5" y="467" width="10" height="16.6" fill="#c9a53a"/><circle cx="471.5" cy="475.3" r="2.9" fill="#75734a"/><circle cx="472.1" cy="475.8" r="2.2" fill="#8a8a88"/>
<rect x="481.4" y="466.5" width="10" height="16.6" fill="#c9a53a"/><circle cx="486.4" cy="474.8" r="2.9" fill="#75734a"/><circle cx="487" cy="475.3" r="2.2" fill="#8a8a88"/>
<rect x="496.3" y="466" width="10" height="16.6" fill="#c9a53a"/><circle cx="501.3" cy="474.3" r="2.9" fill="#75734a"/><circle cx="501.9" cy="474.8" r="2.2" fill="#8a8a88"/>
<rect x="511.2" y="465.5" width="10" height="16.6" fill="#c9a53a"/><circle cx="516.2" cy="473.8" r="2.9" fill="#75734a"/><circle cx="516.8" cy="474.3" r="2.2" fill="#8a8a88"/>
<rect x="526.1" y="464.9" width="10" height="16.6" fill="#c9a53a"/><circle cx="531.1" cy="473.2" r="2.9" fill="#75734a"/><circle cx="531.7" cy="473.8" r="2.2" fill="#8a8a88"/>
<rect x="541" y="464.4" width="10" height="16.6" fill="#c9a53a"/><circle cx="546" cy="472.7" r="2.9" fill="#75734a"/><circle cx="546.6" cy="473.3" r="2.2" fill="#8a8a88"/>
<rect x="555.9" y="463.9" width="10" height="16.6" fill="#c9a53a"/><circle cx="560.9" cy="472.2" r="2.9" fill="#75734a"/><circle cx="561.5" cy="472.8" r="2.2" fill="#8a8a88"/>
<rect x="586" y="463.4" width="9" height="16" fill="#c9a53a"/><circle cx="590.5" cy="471.4" r="2.8" fill="#75734a"/><circle cx="591.1" cy="471.9" r="2.1" fill="#8a8a88"/>
<rect x="600.2" y="463" width="9" height="16" fill="#c9a53a"/><circle cx="604.7" cy="471" r="2.8" fill="#75734a"/><circle cx="605.2" cy="471.5" r="2.1" fill="#8a8a88"/>
<rect x="614.4" y="462.6" width="9" height="16" fill="#c9a53a"/><circle cx="618.9" cy="470.6" r="2.8" fill="#75734a"/><circle cx="619.4" cy="471.1" r="2.1" fill="#8a8a88"/>
<rect x="628.5" y="462.1" width="9" height="16" fill="#c9a53a"/><circle cx="633" cy="470.1" r="2.8" fill="#75734a"/><circle cx="633.6" cy="470.6" r="2.1" fill="#8a8a88"/>
<rect x="642.7" y="461.7" width="9" height="16" fill="#c9a53a"/><circle cx="647.2" cy="469.7" r="2.8" fill="#75734a"/><circle cx="647.8" cy="470.2" r="2.1" fill="#8a8a88"/>
<rect x="656.9" y="461.3" width="9" height="16" fill="#c9a53a"/><circle cx="661.4" cy="469.3" r="2.8" fill="#75734a"/><circle cx="662" cy="469.8" r="2.1" fill="#8a8a88"/>
<circle cx="854.2" cy="196" r="6.6" fill="#c9a53a"/><circle cx="854.2" cy="196" r="3.2" fill="#6e6d4f"/>
<circle cx="876.4" cy="197.1" r="6.6" fill="#c9a53a"/><circle cx="876.4" cy="197.1" r="3.2" fill="#6e6d4f"/>
<circle cx="898.2" cy="197.3" r="6.6" fill="#c9a53a"/><circle cx="898.2" cy="197.3" r="3.2" fill="#6e6d4f"/>
<circle cx="853.4" cy="219.5" r="6.6" fill="#c9a53a"/><circle cx="853.4" cy="219.5" r="3.2" fill="#6e6d4f"/>
<circle cx="875.5" cy="220.6" r="6.6" fill="#c9a53a"/><circle cx="875.5" cy="220.6" r="3.2" fill="#6e6d4f"/>
<circle cx="897.2" cy="220.8" r="6.6" fill="#c9a53a"/><circle cx="897.2" cy="220.8" r="3.2" fill="#6e6d4f"/>
<circle cx="852.7" cy="238.6" r="6.6" fill="#c9a53a"/><circle cx="852.7" cy="238.6" r="3.2" fill="#6e6d4f"/>
<circle cx="874.8" cy="239.7" r="6.6" fill="#c9a53a"/><circle cx="874.8" cy="239.7" r="3.2" fill="#6e6d4f"/>
<circle cx="896.5" cy="239.9" r="6.6" fill="#c9a53a"/><circle cx="896.5" cy="239.9" r="3.2" fill="#6e6d4f"/>
<circle cx="852" cy="257.4" r="6.6" fill="#c9a53a"/><circle cx="852" cy="257.4" r="3.2" fill="#6e6d4f"/>
<circle cx="874.1" cy="258.5" r="6.6" fill="#c9a53a"/><circle cx="874.1" cy="258.5" r="3.2" fill="#6e6d4f"/>
<circle cx="895.7" cy="258.7" r="6.6" fill="#c9a53a"/><circle cx="895.7" cy="258.7" r="3.2" fill="#6e6d4f"/>
<circle cx="851.3" cy="275.9" r="6.6" fill="#c9a53a"/><circle cx="851.3" cy="275.9" r="3.2" fill="#6e6d4f"/>
<circle cx="873.4" cy="277" r="6.6" fill="#c9a53a"/><circle cx="873.4" cy="277" r="3.2" fill="#6e6d4f"/>
<circle cx="894.9" cy="277.2" r="6.6" fill="#c9a53a"/><circle cx="894.9" cy="277.2" r="3.2" fill="#6e6d4f"/>
<circle cx="850.7" cy="294.3" r="6.6" fill="#c9a53a"/><circle cx="850.7" cy="294.3" r="3.2" fill="#6e6d4f"/>
<circle cx="872.7" cy="295.4" r="6.6" fill="#c9a53a"/><circle cx="872.7" cy="295.4" r="3.2" fill="#6e6d4f"/>
<circle cx="894.2" cy="295.6" r="6.6" fill="#c9a53a"/><circle cx="894.2" cy="295.6" r="3.2" fill="#6e6d4f"/>
<circle cx="850" cy="313.3" r="6.6" fill="#c9a53a"/><circle cx="850" cy="313.3" r="3.2" fill="#6e6d4f"/>
<circle cx="872" cy="314.4" r="6.6" fill="#c9a53a"/><circle cx="872" cy="314.4" r="3.2" fill="#6e6d4f"/>
<circle cx="893.4" cy="314.6" r="6.6" fill="#c9a53a"/><circle cx="893.4" cy="314.6" r="3.2" fill="#6e6d4f"/>
<circle cx="849.2" cy="336" r="6.6" fill="#c9a53a"/><circle cx="849.2" cy="336" r="3.2" fill="#6e6d4f"/>
<circle cx="871.2" cy="337.1" r="6.6" fill="#c9a53a"/><circle cx="871.2" cy="337.1" r="3.2" fill="#6e6d4f"/>
<circle cx="892.5" cy="337.3" r="6.6" fill="#c9a53a"/><circle cx="892.5" cy="337.3" r="3.2" fill="#6e6d4f"/>
<circle cx="844.2" cy="486.5" r="6.3" fill="#c9a53a"/><circle cx="844.2" cy="486.5" r="3.1" fill="#6e6d4f"/>
<circle cx="865.4" cy="485.5" r="6.3" fill="#c9a53a"/><circle cx="865.4" cy="485.5" r="3.1" fill="#6e6d4f"/>
<circle cx="885.7" cy="484.8" r="6.3" fill="#c9a53a"/><circle cx="885.7" cy="484.8" r="3.1" fill="#6e6d4f"/>
<circle cx="843.5" cy="507.8" r="6.3" fill="#c9a53a"/><circle cx="843.5" cy="507.8" r="3.1" fill="#6e6d4f"/>
<circle cx="864.6" cy="506.7" r="6.3" fill="#c9a53a"/><circle cx="864.6" cy="506.7" r="3.1" fill="#6e6d4f"/>
<circle cx="884.8" cy="505.9" r="6.3" fill="#c9a53a"/><circle cx="884.8" cy="505.9" r="3.1" fill="#6e6d4f"/>
<circle cx="842.8" cy="525" r="6.3" fill="#c9a53a"/><circle cx="842.8" cy="525" r="3.1" fill="#6e6d4f"/>
<circle cx="864" cy="523.8" r="6.3" fill="#c9a53a"/><circle cx="864" cy="523.8" r="3.1" fill="#6e6d4f"/>
<circle cx="884.1" cy="522.8" r="6.3" fill="#c9a53a"/><circle cx="884.1" cy="522.8" r="3.1" fill="#6e6d4f"/>
<circle cx="842.2" cy="542.4" r="6.3" fill="#c9a53a"/><circle cx="842.2" cy="542.4" r="3.1" fill="#6e6d4f"/>
<circle cx="863.4" cy="541.1" r="6.3" fill="#c9a53a"/><circle cx="863.4" cy="541.1" r="3.1" fill="#6e6d4f"/>
<circle cx="883.4" cy="540" r="6.3" fill="#c9a53a"/><circle cx="883.4" cy="540" r="3.1" fill="#6e6d4f"/>
<circle cx="841.6" cy="559.5" r="6.3" fill="#c9a53a"/><circle cx="841.6" cy="559.5" r="3.1" fill="#6e6d4f"/>
<circle cx="862.7" cy="558" r="6.3" fill="#c9a53a"/><circle cx="862.7" cy="558" r="3.1" fill="#6e6d4f"/>
<circle cx="882.7" cy="556.9" r="6.3" fill="#c9a53a"/><circle cx="882.7" cy="556.9" r="3.1" fill="#6e6d4f"/>
<circle cx="841" cy="576.3" r="6.3" fill="#c9a53a"/><circle cx="841" cy="576.3" r="3.1" fill="#6e6d4f"/>
<circle cx="862.1" cy="574.7" r="6.3" fill="#c9a53a"/><circle cx="862.1" cy="574.7" r="3.1" fill="#6e6d4f"/>
<circle cx="882.1" cy="573.5" r="6.3" fill="#c9a53a"/><circle cx="882.1" cy="573.5" r="3.1" fill="#6e6d4f"/>
<circle cx="840.4" cy="593.4" r="6.3" fill="#c9a53a"/><circle cx="840.4" cy="593.4" r="3.1" fill="#6e6d4f"/>
<circle cx="861.5" cy="591.7" r="6.3" fill="#c9a53a"/><circle cx="861.5" cy="591.7" r="3.1" fill="#6e6d4f"/>
<circle cx="881.4" cy="590.4" r="6.3" fill="#c9a53a"/><circle cx="881.4" cy="590.4" r="3.1" fill="#6e6d4f"/>
<circle cx="839.7" cy="614.7" r="6.3" fill="#c9a53a"/><circle cx="839.7" cy="614.7" r="3.1" fill="#6e6d4f"/>
<circle cx="860.7" cy="612.9" r="6.3" fill="#c9a53a"/><circle cx="860.7" cy="612.9" r="3.1" fill="#6e6d4f"/>
<circle cx="880.5" cy="611.5" r="6.3" fill="#c9a53a"/><circle cx="880.5" cy="611.5" r="3.1" fill="#6e6d4f"/>
<rect x="462.6" y="303.6" width="13.2" height="13.2" fill="#c9a53a"/><circle cx="469.2" cy="310.2" r="3.1" fill="#75734a"/><circle cx="469.8" cy="310.8" r="2.4" fill="#8a8a88"/>
<rect x="462.6" y="319.4" width="13.2" height="13.2" fill="#c9a53a"/><circle cx="469.2" cy="326" r="3.1" fill="#75734a"/><circle cx="469.8" cy="326.6" r="2.4" fill="#8a8a88"/>
<rect x="462.6" y="334.6" width="13.2" height="13.2" fill="#c9a53a"/><circle cx="469.2" cy="341.2" r="3.1" fill="#75734a"/><circle cx="469.8" cy="341.8" r="2.4" fill="#8a8a88"/>
<rect x="477.8" y="303.6" width="13.2" height="13.2" fill="#c9a53a"/><circle cx="484.4" cy="310.2" r="3.1" fill="#75734a"/><circle cx="485" cy="310.8" r="2.4" fill="#8a8a88"/>
<rect x="477.8" y="319.4" width="13.2" height="13.2" fill="#c9a53a"/><circle cx="484.4" cy="326" r="3.1" fill="#75734a"/><circle cx="485" cy="326.6" r="2.4" fill="#8a8a88"/>
<rect x="477.8" y="334.6" width="13.2" height="13.2" fill="#c9a53a"/><circle cx="484.4" cy="341.2" r="3.1" fill="#75734a"/><circle cx="485" cy="341.8" r="2.4" fill="#8a8a88"/>
<circle cx="321" cy="272" r="6.2" fill="#c9a53a"/><circle cx="321" cy="272" r="2.6" fill="#7b7960"/>
<circle cx="322.3" cy="303.2" r="6.2" fill="#c9a53a"/><circle cx="322.3" cy="303.2" r="2.6" fill="#7b7960"/>
<circle cx="547.6" cy="246.3" r="5.6" fill="#c9a53a"/><circle cx="547.6" cy="246.3" r="2.4" fill="#7b7960"/>
<circle cx="548" cy="276" r="5.6" fill="#c9a53a"/><circle cx="548" cy="276" r="2.4" fill="#7b7960"/>
<circle cx="324.4" cy="352" r="4" fill="#c9a53a"/><circle cx="324.4" cy="352" r="1.9" fill="#7b7960"/>
<circle cx="334.5" cy="352" r="4" fill="#c9a53a"/><circle cx="334.5" cy="352" r="1.9" fill="#7b7960"/>
<circle cx="330.3" cy="410" r="4" fill="#c9a53a"/><circle cx="330.3" cy="410" r="1.9" fill="#7b7960"/>
<circle cx="339.3" cy="410" r="4" fill="#c9a53a"/><circle cx="339.3" cy="410" r="1.9" fill="#7b7960"/>
<text x="394.8" y="300.2" font-size="9.6" text-anchor="start" fill="#dfe4ee" textLength="20" lengthAdjust="spacingAndGlyphs">R67</text>
<text x="395.3" y="314.8" font-size="9.6" text-anchor="start" fill="#dfe4ee" textLength="20" lengthAdjust="spacingAndGlyphs">R66</text>
<text x="395.8" y="329.8" font-size="9.6" text-anchor="start" fill="#dfe4ee" textLength="20" lengthAdjust="spacingAndGlyphs">R65</text>
<text x="396.3" y="344.7" font-size="9.6" text-anchor="start" fill="#dfe4ee" textLength="20" lengthAdjust="spacingAndGlyphs">R64</text>
<text x="396.8" y="359.3" font-size="9.6" text-anchor="start" fill="#dfe4ee" textLength="20" lengthAdjust="spacingAndGlyphs">R63</text>
<text x="397.3" y="374.1" font-size="9.6" text-anchor="start" fill="#dfe4ee" textLength="20" lengthAdjust="spacingAndGlyphs">R62</text>
<text x="406.7" y="396.6" font-size="9.6" text-anchor="start" fill="#dfe4ee" textLength="20" lengthAdjust="spacingAndGlyphs">C38</text>
<text x="406.9" y="409.3" font-size="9.6" text-anchor="start" fill="#dfe4ee" textLength="20" lengthAdjust="spacingAndGlyphs">R36</text>
<text x="407.2" y="421.3" font-size="9.6" text-anchor="start" fill="#dfe4ee" textLength="20" lengthAdjust="spacingAndGlyphs">R23</text>
<text x="409.7" y="434.9" font-size="9.6" text-anchor="start" fill="#dfe4ee" textLength="20" lengthAdjust="spacingAndGlyphs">R24</text>
<text x="410.2" y="446.7" font-size="9.6" text-anchor="start" fill="#dfe4ee" textLength="20" lengthAdjust="spacingAndGlyphs">R37</text>
<text x="411" y="459.6" font-size="9.6" text-anchor="start" fill="#dfe4ee" textLength="20" lengthAdjust="spacingAndGlyphs">C62</text>
<text x="358.5" y="412.8" font-size="9.6" text-anchor="start" fill="#dfe4ee" textLength="20.3" lengthAdjust="spacingAndGlyphs">C25</text>
<text x="367.3" y="571.6" font-size="10" text-anchor="end" fill="#dfe4ee" textLength="22.5" lengthAdjust="spacingAndGlyphs">R100</text>
<text x="367.8" y="586.6" font-size="10" text-anchor="end" fill="#dfe4ee" textLength="22" lengthAdjust="spacingAndGlyphs">R101</text>
<text x="787.5" y="444.2" font-size="8.8" text-anchor="end" fill="#dfe4ee" textLength="17" lengthAdjust="spacingAndGlyphs">R35</text>
<text x="783.3" y="456.9" font-size="8.8" text-anchor="end" fill="#dfe4ee" textLength="16.5" lengthAdjust="spacingAndGlyphs">R33</text>
<text x="782.3" y="469.4" font-size="8.8" text-anchor="end" fill="#dfe4ee" textLength="16" lengthAdjust="spacingAndGlyphs">R69</text>
<text transform="translate(495.8 413.3) rotate(-90)" x="0" y="3.8" font-size="10.5" text-anchor="start" fill="#dfe4ee" textLength="17.8" lengthAdjust="spacingAndGlyphs">R29</text>
<text transform="translate(514 413.3) rotate(-90)" x="0" y="3.8" font-size="10.5" text-anchor="start" fill="#dfe4ee" textLength="17.8" lengthAdjust="spacingAndGlyphs">R28</text>
<text transform="translate(528 433.8) rotate(-90)" x="0" y="3.8" font-size="10.5" text-anchor="start" fill="#dfe4ee" textLength="17.2" lengthAdjust="spacingAndGlyphs">R30</text>
<text transform="translate(484.6 458) rotate(-90)" x="0" y="3.8" font-size="10.5" text-anchor="start" fill="#dfe4ee" textLength="15" lengthAdjust="spacingAndGlyphs">R31</text>
<text transform="translate(543.8 456.8) rotate(-90)" x="0" y="3.8" font-size="10.5" text-anchor="start" fill="#dfe4ee" textLength="17.2" lengthAdjust="spacingAndGlyphs">R32</text>
<text transform="translate(567 268.3) rotate(90)" x="0" y="3.6" font-size="10" text-anchor="start" fill="#dfe4ee" textLength="19" lengthAdjust="spacingAndGlyphs">R50</text>
<text transform="translate(593.5 265.3) rotate(90)" x="0" y="3.6" font-size="10" text-anchor="start" fill="#dfe4ee" textLength="19" lengthAdjust="spacingAndGlyphs">R45</text>
<text transform="translate(611.6 265.3) rotate(90)" x="0" y="3.6" font-size="10" text-anchor="start" fill="#dfe4ee" textLength="19" lengthAdjust="spacingAndGlyphs">R46</text>
<text transform="translate(626.2 265.8) rotate(90)" x="0" y="3.6" font-size="10" text-anchor="start" fill="#dfe4ee" textLength="19" lengthAdjust="spacingAndGlyphs">R47</text>
<text transform="translate(651.7 259.5) rotate(90)" x="0" y="3.6" font-size="10" text-anchor="start" fill="#dfe4ee" textLength="18.5" lengthAdjust="spacingAndGlyphs">R49</text>
<text transform="translate(658.8 266) rotate(90)" x="0" y="3.6" font-size="10" text-anchor="start" fill="#dfe4ee" textLength="18.5" lengthAdjust="spacingAndGlyphs">R48</text>
<text transform="translate(676.7 248.6) rotate(90)" x="0" y="3.6" font-size="10" text-anchor="start" fill="#dfe4ee" textLength="18" lengthAdjust="spacingAndGlyphs">R51</text>
<text transform="translate(690 248.6) rotate(90)" x="0" y="3.6" font-size="10" text-anchor="start" fill="#dfe4ee" textLength="18" lengthAdjust="spacingAndGlyphs">R52</text>
<text transform="translate(731.8 389.3) rotate(90)" x="0" y="3" font-size="8.4" text-anchor="start" fill="#dfe4ee" textLength="17" lengthAdjust="spacingAndGlyphs">R58</text>
<text transform="translate(731.8 412.2) rotate(90)" x="0" y="3" font-size="8.4" text-anchor="start" fill="#dfe4ee" textLength="17" lengthAdjust="spacingAndGlyphs">R60</text>
<text transform="translate(731.5 435) rotate(90)" x="0" y="3" font-size="8.4" text-anchor="start" fill="#dfe4ee" textLength="14.5" lengthAdjust="spacingAndGlyphs">R61</text>
<text x="761.5" y="218" font-size="8.3" text-anchor="end" fill="#dfe5ef" textLength="24.5" lengthAdjust="spacingAndGlyphs">Out 1|2</text>
<text x="761" y="235.3" font-size="8.3" text-anchor="end" fill="#dfe5ef" textLength="26" lengthAdjust="spacingAndGlyphs">Out 3|4</text>
<text x="761" y="254" font-size="8.3" text-anchor="end" fill="#dfe5ef" textLength="32.3" lengthAdjust="spacingAndGlyphs">CAN4 H|L</text>
<text x="760" y="269.3" font-size="8.3" text-anchor="end" fill="#dfe5ef" textLength="32" lengthAdjust="spacingAndGlyphs">CAN3 H|L</text>
<text x="759.5" y="286.3" font-size="8.3" text-anchor="end" fill="#dfe5ef" textLength="32" lengthAdjust="spacingAndGlyphs">CAN2 H|L</text>
<text x="758" y="304.7" font-size="8.3" text-anchor="end" fill="#dfe5ef" textLength="30.5" lengthAdjust="spacingAndGlyphs">CAN1 H|L</text>
<text x="755.8" y="322" font-size="8.3" text-anchor="end" fill="#dfe5ef" textLength="18.3" lengthAdjust="spacingAndGlyphs">A1|A0</text>
<text x="755" y="338.4" font-size="8.3" text-anchor="end" fill="#dfe5ef" textLength="20" lengthAdjust="spacingAndGlyphs">A2|A3</text>
<text x="756.7" y="353" font-size="8.3" text-anchor="end" fill="#dfe5ef" textLength="43.7" lengthAdjust="spacingAndGlyphs">GND|+5v reg</text>
<rect x="367.2" y="289.2" width="9.4" height="13.6" fill="#fff"/><rect x="381.4" y="289.2" width="9.4" height="13.6" fill="#fff"/><rect x="368.5" y="290.5" width="6.2" height="11" fill="#c9a53a"/><rect x="383.3" y="290.5" width="6.2" height="11" fill="#c9a53a"/><rect x="373.4" y="290.8" width="11.3" height="10.3" fill="#e8e8e8"/><rect x="374.9" y="290.8" width="8.3" height="10.3" fill="#555"/>
<rect x="367.7" y="304.2" width="9.4" height="13.6" fill="#fff"/><rect x="381.8" y="304.2" width="9.4" height="13.6" fill="#fff"/><rect x="369" y="305.5" width="6.2" height="11" fill="#c9a53a"/><rect x="383.7" y="305.5" width="6.2" height="11" fill="#c9a53a"/><rect x="373.9" y="305.8" width="11.3" height="10.3" fill="#e8e8e8"/><rect x="375.4" y="305.8" width="8.3" height="10.3" fill="#555"/>
<rect x="368.2" y="319.2" width="9.4" height="13.6" fill="#fff"/><rect x="382.3" y="319.2" width="9.4" height="13.6" fill="#fff"/><rect x="369.5" y="320.5" width="6.2" height="11" fill="#c9a53a"/><rect x="384.2" y="320.5" width="6.2" height="11" fill="#c9a53a"/><rect x="374.3" y="320.8" width="11.3" height="10.3" fill="#e8e8e8"/><rect x="375.8" y="320.8" width="8.3" height="10.3" fill="#555"/>
<rect x="368.6" y="334.2" width="9.4" height="13.6" fill="#fff"/><rect x="382.8" y="334.2" width="9.4" height="13.6" fill="#fff"/><rect x="369.9" y="335.5" width="6.2" height="11" fill="#c9a53a"/><rect x="384.7" y="335.5" width="6.2" height="11" fill="#c9a53a"/><rect x="374.8" y="335.8" width="11.3" height="10.3" fill="#e8e8e8"/><rect x="376.3" y="335.8" width="8.3" height="10.3" fill="#555"/>
<rect x="369.1" y="348.7" width="9.4" height="13.6" fill="#fff"/><rect x="383.3" y="348.7" width="9.4" height="13.6" fill="#fff"/><rect x="370.4" y="350" width="6.2" height="11" fill="#c9a53a"/><rect x="385.2" y="350" width="6.2" height="11" fill="#c9a53a"/><rect x="375.3" y="350.3" width="11.3" height="10.3" fill="#e8e8e8"/><rect x="376.8" y="350.3" width="8.3" height="10.3" fill="#555"/>
<rect x="369.6" y="363.5" width="9.4" height="13.6" fill="#fff"/><rect x="383.8" y="363.5" width="9.4" height="13.6" fill="#fff"/><rect x="370.9" y="364.8" width="6.2" height="11" fill="#c9a53a"/><rect x="385.7" y="364.8" width="6.2" height="11" fill="#c9a53a"/><rect x="375.8" y="365.1" width="11.3" height="10.3" fill="#e8e8e8"/><rect x="377.3" y="365.1" width="8.3" height="10.3" fill="#555"/>
<rect x="341" y="327.2" width="9.8" height="13.6" fill="#fff"/><rect x="355.6" y="327.2" width="9.8" height="13.6" fill="#fff"/><rect x="342.3" y="328.5" width="6.6" height="11" fill="#c9a53a"/><rect x="357.5" y="328.5" width="6.6" height="11" fill="#c9a53a"/><rect x="347.4" y="328.8" width="11.5" height="10.3" fill="#e8e8e8"/><rect x="348.9" y="328.8" width="8.5" height="10.3" fill="#555"/>
<rect x="381.8" y="387.7" width="8.9" height="12.4" fill="#fff"/><rect x="395.1" y="387.7" width="8.9" height="12.4" fill="#fff"/><rect x="383.1" y="389" width="5.7" height="9.8" fill="#c9a53a"/><rect x="397" y="389" width="5.7" height="9.8" fill="#c9a53a"/><rect x="387.5" y="389.2" width="10.8" height="9.4" fill="#e8e8e8"/><rect x="389" y="389.2" width="7.8" height="9.4" fill="#555"/>
<rect x="382.2" y="400.5" width="8.9" height="12.4" fill="#fff"/><rect x="395.5" y="400.5" width="8.9" height="12.4" fill="#fff"/><rect x="383.5" y="401.8" width="5.7" height="9.8" fill="#c9a53a"/><rect x="397.4" y="401.8" width="5.7" height="9.8" fill="#c9a53a"/><rect x="387.9" y="402" width="10.8" height="9.4" fill="#e8e8e8"/><rect x="389.4" y="402" width="7.8" height="9.4" fill="#555"/>
<rect x="382.5" y="412.4" width="8.9" height="12.4" fill="#fff"/><rect x="395.8" y="412.4" width="8.9" height="12.4" fill="#fff"/><rect x="383.8" y="413.7" width="5.7" height="9.8" fill="#c9a53a"/><rect x="397.7" y="413.7" width="5.7" height="9.8" fill="#c9a53a"/><rect x="388.2" y="413.9" width="10.8" height="9.4" fill="#e8e8e8"/><rect x="389.7" y="413.9" width="7.8" height="9.4" fill="#555"/>
<rect x="382.9" y="426" width="8.9" height="12.4" fill="#fff"/><rect x="396.2" y="426" width="8.9" height="12.4" fill="#fff"/><rect x="384.2" y="427.3" width="5.7" height="9.8" fill="#c9a53a"/><rect x="398.1" y="427.3" width="5.7" height="9.8" fill="#c9a53a"/><rect x="388.6" y="427.5" width="10.8" height="9.4" fill="#e8e8e8"/><rect x="390.1" y="427.5" width="7.8" height="9.4" fill="#555"/>
<rect x="383.2" y="437.7" width="8.9" height="12.4" fill="#fff"/><rect x="396.6" y="437.7" width="8.9" height="12.4" fill="#fff"/><rect x="384.5" y="439" width="5.7" height="9.8" fill="#c9a53a"/><rect x="398.5" y="439" width="5.7" height="9.8" fill="#c9a53a"/><rect x="389" y="439.2" width="10.8" height="9.4" fill="#e8e8e8"/><rect x="390.5" y="439.2" width="7.8" height="9.4" fill="#555"/>
<rect x="383.6" y="450.8" width="8.9" height="12.4" fill="#fff"/><rect x="396.9" y="450.8" width="8.9" height="12.4" fill="#fff"/><rect x="384.9" y="452.1" width="5.7" height="9.8" fill="#c9a53a"/><rect x="398.8" y="452.1" width="5.7" height="9.8" fill="#c9a53a"/><rect x="389.3" y="452.3" width="10.8" height="9.4" fill="#e8e8e8"/><rect x="390.8" y="452.3" width="7.8" height="9.4" fill="#555"/>
<rect x="355.9" y="415.5" width="9.4" height="13" fill="#fff"/><rect x="370.1" y="415.5" width="9.4" height="13" fill="#fff"/><rect x="357.2" y="416.8" width="6.2" height="10.4" fill="#c9a53a"/><rect x="371.9" y="416.8" width="6.2" height="10.4" fill="#c9a53a"/><rect x="362.1" y="417.1" width="11.2" height="9.9" fill="#e8e8e8"/><rect x="363.6" y="417.1" width="8.2" height="9.9" fill="#555"/>
<rect x="367.9" y="560.2" width="9.5" height="13.3" fill="#fff"/><rect x="382.2" y="560.2" width="9.5" height="13.3" fill="#fff"/><rect x="369.2" y="561.5" width="6.3" height="10.7" fill="#c9a53a"/><rect x="384.1" y="561.5" width="6.3" height="10.7" fill="#c9a53a"/><rect x="374.1" y="561.8" width="11.3" height="10.1" fill="#e8e8e8"/><rect x="375.6" y="561.8" width="8.3" height="10.1" fill="#555"/>
<rect x="368.7" y="574.9" width="9.5" height="13.6" fill="#fff"/><rect x="383" y="574.9" width="9.5" height="13.6" fill="#fff"/><rect x="370" y="576.2" width="6.3" height="11" fill="#c9a53a"/><rect x="384.9" y="576.2" width="6.3" height="11" fill="#c9a53a"/><rect x="374.9" y="576.5" width="11.3" height="10.3" fill="#e8e8e8"/><rect x="376.4" y="576.5" width="8.3" height="10.3" fill="#555"/>
<rect x="787.4" y="435.1" width="7.4" height="10.6" fill="#fff"/><rect x="798.6" y="435.1" width="7.4" height="10.6" fill="#fff"/><rect x="788.7" y="436.4" width="4.2" height="8" fill="#c9a53a"/><rect x="800.5" y="436.4" width="4.2" height="8" fill="#c9a53a"/><rect x="791.9" y="436.4" width="9.5" height="8.1" fill="#e8e8e8"/><rect x="793.4" y="436.4" width="6.5" height="8.1" fill="#555"/>
<rect x="787.2" y="448.2" width="7.4" height="10.6" fill="#fff"/><rect x="798.4" y="448.2" width="7.4" height="10.6" fill="#fff"/><rect x="788.5" y="449.5" width="4.2" height="8" fill="#c9a53a"/><rect x="800.3" y="449.5" width="4.2" height="8" fill="#c9a53a"/><rect x="791.7" y="449.5" width="9.5" height="8.1" fill="#e8e8e8"/><rect x="793.2" y="449.5" width="6.5" height="8.1" fill="#555"/>
<rect x="786.8" y="460.8" width="7.4" height="10.6" fill="#fff"/><rect x="798" y="460.8" width="7.4" height="10.6" fill="#fff"/><rect x="788.1" y="462.1" width="4.2" height="8" fill="#c9a53a"/><rect x="799.9" y="462.1" width="4.2" height="8" fill="#c9a53a"/><rect x="791.3" y="462.1" width="9.5" height="8.1" fill="#e8e8e8"/><rect x="792.8" y="462.1" width="6.5" height="8.1" fill="#555"/>
<rect x="570.4" y="277.9" width="13.3" height="8.9" fill="#fff"/><rect x="570.4" y="291.2" width="13.3" height="8.9" fill="#fff"/><rect x="571.6" y="279.2" width="10.7" height="5.7" fill="#c9a53a"/><rect x="571.6" y="293.1" width="10.7" height="5.7" fill="#c9a53a"/><rect x="573" y="282.8" width="8" height="12.3" fill="#e8e8e8"/><rect x="573" y="284.3" width="8" height="9.3" fill="#555"/>
<rect x="585.4" y="277.9" width="13.3" height="8.9" fill="#fff"/><rect x="585.4" y="291.2" width="13.3" height="8.9" fill="#fff"/><rect x="586.6" y="279.2" width="10.7" height="5.7" fill="#c9a53a"/><rect x="586.6" y="293.1" width="10.7" height="5.7" fill="#c9a53a"/><rect x="588" y="282.8" width="8" height="12.3" fill="#e8e8e8"/><rect x="588" y="284.3" width="8" height="9.3" fill="#555"/>
<rect x="603.4" y="277.9" width="13.3" height="8.9" fill="#fff"/><rect x="603.4" y="291.2" width="13.3" height="8.9" fill="#fff"/><rect x="604.6" y="279.2" width="10.7" height="5.7" fill="#c9a53a"/><rect x="604.6" y="293.1" width="10.7" height="5.7" fill="#c9a53a"/><rect x="606" y="282.8" width="8" height="12.3" fill="#e8e8e8"/><rect x="606" y="284.3" width="8" height="9.3" fill="#555"/>
<rect x="618.4" y="277.9" width="13.3" height="8.9" fill="#fff"/><rect x="618.4" y="291.2" width="13.3" height="8.9" fill="#fff"/><rect x="619.6" y="279.2" width="10.7" height="5.7" fill="#c9a53a"/><rect x="619.6" y="293.1" width="10.7" height="5.7" fill="#c9a53a"/><rect x="621" y="282.8" width="8" height="12.3" fill="#e8e8e8"/><rect x="621" y="284.3" width="8" height="9.3" fill="#555"/>
<rect x="635.6" y="277.9" width="13.3" height="8.9" fill="#fff"/><rect x="635.6" y="291.2" width="13.3" height="8.9" fill="#fff"/><rect x="636.9" y="279.2" width="10.7" height="5.7" fill="#c9a53a"/><rect x="636.9" y="293.1" width="10.7" height="5.7" fill="#c9a53a"/><rect x="638.3" y="282.8" width="8" height="12.3" fill="#e8e8e8"/><rect x="638.3" y="284.3" width="8" height="9.3" fill="#555"/>
<rect x="650.4" y="277.9" width="13.3" height="8.9" fill="#fff"/><rect x="650.4" y="291.2" width="13.3" height="8.9" fill="#fff"/><rect x="651.6" y="279.2" width="10.7" height="5.7" fill="#c9a53a"/><rect x="651.6" y="293.1" width="10.7" height="5.7" fill="#c9a53a"/><rect x="653" y="282.8" width="8" height="12.3" fill="#e8e8e8"/><rect x="653" y="284.3" width="8" height="9.3" fill="#555"/>
<rect x="668" y="261.4" width="13" height="8.8" fill="#fff"/><rect x="668" y="274.6" width="13" height="8.8" fill="#fff"/><rect x="669.3" y="262.7" width="10.4" height="5.6" fill="#c9a53a"/><rect x="669.3" y="276.5" width="10.4" height="5.6" fill="#c9a53a"/><rect x="670.6" y="266.3" width="7.8" height="12.2" fill="#e8e8e8"/><rect x="670.6" y="267.8" width="7.8" height="9.2" fill="#555"/>
<rect x="681.9" y="261.4" width="13" height="8.8" fill="#fff"/><rect x="681.9" y="274.6" width="13" height="8.8" fill="#fff"/><rect x="683.2" y="262.7" width="10.4" height="5.6" fill="#c9a53a"/><rect x="683.2" y="276.5" width="10.4" height="5.6" fill="#c9a53a"/><rect x="684.5" y="266.3" width="7.8" height="12.2" fill="#e8e8e8"/><rect x="684.5" y="267.8" width="7.8" height="9.2" fill="#555"/>
<rect x="490" y="415.3" width="13.4" height="8.6" fill="#fff"/><rect x="490" y="428.1" width="13.4" height="8.6" fill="#fff"/><rect x="491.3" y="416.6" width="10.8" height="5.4" fill="#c9a53a"/><rect x="491.3" y="430" width="10.8" height="5.4" fill="#c9a53a"/><rect x="492.7" y="420" width="8" height="12" fill="#e8e8e8"/><rect x="492.7" y="421.5" width="8" height="9" fill="#555"/>
<rect x="508.1" y="415" width="13.4" height="8.5" fill="#fff"/><rect x="508.1" y="427.7" width="13.4" height="8.5" fill="#fff"/><rect x="509.4" y="416.3" width="10.8" height="5.3" fill="#c9a53a"/><rect x="509.4" y="429.6" width="10.8" height="5.3" fill="#c9a53a"/><rect x="510.8" y="419.6" width="8" height="11.9" fill="#e8e8e8"/><rect x="510.8" y="421.1" width="8" height="8.9" fill="#555"/>
<rect x="490.2" y="439" width="13.6" height="8.4" fill="#fff"/><rect x="490.2" y="451.6" width="13.6" height="8.4" fill="#fff"/><rect x="491.5" y="440.3" width="11" height="5.2" fill="#c9a53a"/><rect x="491.5" y="453.5" width="11" height="5.2" fill="#c9a53a"/><rect x="492.9" y="443.6" width="8.2" height="11.8" fill="#e8e8e8"/><rect x="492.9" y="445.1" width="8.2" height="8.8" fill="#555"/>
<rect x="508.2" y="438.9" width="13.5" height="8.4" fill="#fff"/><rect x="508.2" y="451.5" width="13.5" height="8.4" fill="#fff"/><rect x="509.6" y="440.2" width="10.9" height="5.2" fill="#c9a53a"/><rect x="509.6" y="453.4" width="10.9" height="5.2" fill="#c9a53a"/><rect x="510.9" y="443.5" width="8.1" height="11.8" fill="#e8e8e8"/><rect x="510.9" y="445" width="8.1" height="8.8" fill="#555"/>
<rect x="523.2" y="438.5" width="13.5" height="8.4" fill="#fff"/><rect x="523.2" y="451.1" width="13.5" height="8.4" fill="#fff"/><rect x="524.5" y="439.8" width="10.9" height="5.2" fill="#c9a53a"/><rect x="524.5" y="453" width="10.9" height="5.2" fill="#c9a53a"/><rect x="526" y="443.1" width="8.1" height="11.8" fill="#e8e8e8"/><rect x="526" y="444.6" width="8.1" height="8.8" fill="#555"/>
<rect x="714.4" y="387.3" width="12" height="7.9" fill="#fff"/><rect x="714.4" y="399.2" width="12" height="7.9" fill="#fff"/><rect x="715.7" y="388.6" width="9.4" height="4.7" fill="#c9a53a"/><rect x="715.7" y="401.1" width="9.4" height="4.7" fill="#c9a53a"/><rect x="716.8" y="391.5" width="7.2" height="11.3" fill="#e8e8e8"/><rect x="716.8" y="393" width="7.2" height="8.3" fill="#555"/>
<rect x="714.4" y="410" width="12" height="7.9" fill="#fff"/><rect x="714.4" y="421.9" width="12" height="7.9" fill="#fff"/><rect x="715.7" y="411.3" width="9.4" height="4.7" fill="#c9a53a"/><rect x="715.7" y="423.8" width="9.4" height="4.7" fill="#c9a53a"/><rect x="716.8" y="414.2" width="7.2" height="11.3" fill="#e8e8e8"/><rect x="716.8" y="415.7" width="7.2" height="8.3" fill="#555"/>
<rect x="714.4" y="431.9" width="12" height="7.9" fill="#fff"/><rect x="714.4" y="443.8" width="12" height="7.9" fill="#fff"/><rect x="715.7" y="433.2" width="9.4" height="4.7" fill="#c9a53a"/><rect x="715.7" y="445.7" width="9.4" height="4.7" fill="#c9a53a"/><rect x="716.8" y="436.1" width="7.2" height="11.3" fill="#e8e8e8"/><rect x="716.8" y="437.6" width="7.2" height="8.3" fill="#555"/>
</svg>
<svg class="abs" style="left:5px;top:572px" width="50" height="50" viewBox="0 0 50 50" fill="none" stroke="#3a3a3a" stroke-width="2.400" stroke-linecap="round" stroke-linejoin="round"><path d="M45.500 25.500 A20.500 20.500 0 1 1 38 9.500"/><path d="M33 13.500h9.500v-9.500"/></svg>
</div>
<div class="abs" style="left:1177px;top:71px;width:2px;height:657px;background:#fff"></div>
<div class="abs splitR" style="left:1179px;top:71px;width:6px;height:657px"></div>
<div class="abs" style="left:1179px;top:375px;width:6px;height:50px;background:#f0f0f0;border:1px solid #6a5f64"></div>
<svg class="abs" style="left:1180px;top:395px" width="4" height="10"><path d="M0 1l3.500 4-3.500 4z" fill="#6a5f64"/></svg>
<div id="right" class="abs">
<div class="abs" style="left:10px;top:8px;font-size:12px;color:#222;white-space:nowrap">Selected Objects</div>
<div class="abs" style="left:120px;top:8px;font-size:12px;color:#222">0</div>
<div class="hdr" style="top:30px">Canvas Attributes</div>
<div class="row" style="top:60px"><span class="k">Units</span><span class="v" style="padding-left:10px">mm<span class="ar">&#9660;</span></span></div>
<div class="row" style="top:90px"><span class="k">Background</span><span class="v" style="background:#808080;border-color:#8e8e8e;color:#fff;font-weight:bold;font-size:12px;padding-left:6px;border-radius:0">#808080</span></div>
<div class="hdr" style="top:120px">Size</div>
<div class="row" style="top:150px"><span class="k">Board Thickn…</span><span class="v in">1.6mm</span></div>
<div class="row" style="top:180px"><span class="k">Layer Distance</span><span class="v in">0mm</span></div>
<div class="hdr" style="top:210px">Colors</div>
<div class="row" style="top:240px"><span class="k">Board Color</span><span class="v" style="padding-left:10px">Blue<span class="ar">&#9660;</span></span></div>
<div class="row" style="top:270px"><span class="k">Surface Finis…</span><span class="v" style="padding-left:10px">Gold<span class="ar">&#9660;</span></span></div>
<div class="hdr" style="top:300px">Layers</div>
<div class="row" style="top:330px"><span class="k">3DModel</span><span class="v" style="padding-left:10px">Visibl<span class="ar">&#9660;</span></span></div>
<div class="row" style="top:360px"><span class="k">TopSilkLayer</span><span class="v" style="padding-left:10px">Visibl<span class="ar">&#9660;</span></span></div>
<div class="row" style="top:390px"><span class="k">TopSolderMa…</span><span class="v" style="padding-left:10px">Visibl<span class="ar">&#9660;</span></span></div>
<div class="row" style="top:420px"><span class="k">TopPasteMas…</span><span class="v" style="padding-left:10px">Visibl<span class="ar">&#9660;</span></span></div>
<div class="row" style="top:450px"><span class="k">TopLayer</span><span class="v" style="padding-left:10px">Visibl<span class="ar">&#9660;</span></span></div>
<div class="row" style="top:480px"><span class="k">Substrate1</span><span class="v" style="padding-left:10px">Visibl<span class="ar">&#9660;</span></span></div>
<div class="row" style="top:510px"><span class="k">BottomLayer</span><span class="v" style="padding-left:10px">Visibl<span class="ar">&#9660;</span></span></div>
<div class="row" style="top:540px"><span class="k">BottomPaste…</span><span class="v" style="padding-left:10px">Visibl<span class="ar">&#9660;</span></span></div>
<div class="row" style="top:570px"><span class="k">BottomSolder…</span><span class="v" style="padding-left:10px">Visibl<span class="ar">&#9660;</span></span></div>
<div class="row" style="top:600px"><span class="k">BottomSilkLayer</span><span class="v" style="padding-left:10px">Visibl<span class="ar">&#9660;</span></span></div>
</div>
<div class="abs" style="left:1364px;top:71px;width:2px;height:657px;background:#fff"></div>
<div class="abs" style="left:1007px;top:632px;font-size:20px;line-height:24px;color:rgba(185,185,185,0.7);white-space:nowrap;letter-spacing:-0.05px">Активация Windows</div>
<div class="abs" style="left:1007px;top:656px;font-size:15px;line-height:20px;color:rgba(185,185,185,0.7);white-space:nowrap">Чтобы активировать Windows, перейдите в<br>раздел "Параметры".</div>
<div id="taskbar" class="abs">
<svg class="abs" style="left:16px;top:12px" width="16" height="16" viewBox="0 0 16 16" fill="#fff"><path d="M0 2.300l6.500-.9v6.100h-6.500zM7.300 1.300l8.700-1.300v7.500h-8.700zM0 8.300h6.500v6.100l-6.500-.9zM7.300 8.300h8.700v7.700l-8.700-1.300z"/></svg>
<div class="abs" style="left:48px;top:0;width:344px;height:40px;background:#f3f3f3"></div>
<svg class="abs" style="left:59px;top:11px" width="20" height="20" viewBox="0 0 20 20" fill="none" stroke="#222" stroke-width="1.300"><circle cx="12" cy="7.500" r="5"/><path d="M8.500 11l-6.500 6.500"/></svg>
<div class="abs" style="left:88px;top:11px;font-size:15px;color:#222;white-space:nowrap;letter-spacing:-0.25px">Введите здесь текст для поиска</div>
<svg class="abs" style="left:407px;top:9px" width="24" height="22" viewBox="0 0 24 22"><path d="M1 3h8l2 2h12v3h-22z" fill="#e8a917"/><rect x="1" y="6" width="22" height="14" fill="#fcd462"/><rect x="1" y="12" width="22" height="8" fill="#f7c23a"/><rect x="7" y="13" width="10" height="7" fill="#3b98e0"/><rect x="9.500" y="15.500" width="5" height="4.500" fill="#fcd462"/></svg>
<div class="abs" style="left:399px;top:38px;width:40px;height:2px;background:#76b9ed"></div>
<svg class="abs" style="left:456px;top:8px" width="24" height="24" viewBox="0 0 24 24"><defs><linearGradient id="eg" x1="0" y1="0" x2="1" y2="1"><stop offset="0" stop-color="#35c1b1"/><stop offset=".5" stop-color="#2a8fd8"/><stop offset="1" stop-color="#1553a8"/></linearGradient></defs><circle cx="12" cy="12" r="11" fill="url(#eg)"/><path d="M3 14 C3 7 9 5 13 6 C18 7 21 10 21 13 C21 16 17 17 14.500 15.500 C16 13 14 10 11 10 C7 10 5 14 7.500 18 C4.500 17 3 15.500 3 14z" fill="#1a3e8c" opacity=".55"/><path d="M1.500 10 C3 3 12 0 18 4 C21 6 22.500 9 22 12 C21 8 17 5.500 12 6 C7 6.500 3 9 1.500 10z" fill="#5ad06a" opacity=".8"/></svg>
<svg class="abs" style="left:504px;top:8px" width="26" height="26" viewBox="0 0 26 26"><path d="M3 15l10-3 10 3-10 4z" fill="#8a8a8a"/><path d="M3 15v2l10 4 10-4v-2l-10 4z" fill="#5c5c5c"/><path d="M4 19v4M7 20v4M10 21v4M16 21v4M19 20v4M22 19v4" stroke="#9a9a9a" stroke-width="1.200"/><path d="M12 3q5 0 3 4q4 1 2 6q-3 4-7 1l2-9z" fill="none" stroke="#3a53d8" stroke-width="2"/></svg>
<svg class="abs" style="left:553px;top:7px" width="30" height="28" viewBox="0 0 30 28"><circle cx="13" cy="13" r="11.500" fill="#2da5e0"/><path d="M5.500 12.500l13.500-5.500-2.200 11.500-4.300-3-2.200 2.200-.4-3.600 6.300-5.500-7.800 4.800z" fill="#fff"/><rect x="12" y="17" width="17" height="10" rx="1.500" fill="#e8242c"/><text x="20.500" y="25" font-family="Liberation Sans, sans-serif" font-size="8" font-weight="bold" fill="#fff" text-anchor="middle">627</text></svg>
<div class="abs" style="left:546px;top:38px;width:40px;height:2px;background:#76b9ed"></div>
<svg class="abs" style="left:603px;top:8px" width="24" height="24" viewBox="0 0 24 24"><circle cx="12" cy="12" r="11" fill="#dd4b3e"/><path d="M12 12L2.500 6.500A11 11 0 0 0 8 22.300z" fill="#1da362"/><path d="M12 12l-4 10.300A11 11 0 0 0 22.500 8.500z" fill="#fdd140"/><path d="M12 12L22.500 8.500" stroke="#dd4b3e"/><path d="M2.500 6.500A11 11 0 0 1 22.600 9H12z" fill="#dd4b3e"/><circle cx="12" cy="12" r="5" fill="#fff"/><circle cx="12" cy="12" r="3.900" fill="#4a8bf5"/></svg>
<div class="abs" style="left:595px;top:38px;width:40px;height:2px;background:#76b9ed"></div>
<div class="abs" style="left:640px;top:0;width:48px;height:40px;background:#46596a"></div>
<svg class="abs" style="left:652px;top:8px" width="24" height="24" viewBox="0 0 16 16"><rect x="0" y="0" width="16" height="16" rx="2" fill="#4f7ff0"/><path d="M4.200 10.600a2.500 2.500 0 0 1 .3-5 3.400 3.400 0 0 1 6.500-.3 2.600 2.600 0 0 1 .9 5.100" fill="none" stroke="#fff" stroke-width="1.300" stroke-linecap="round"/><circle cx="6" cy="10.600" r="1.300" fill="none" stroke="#fff" stroke-width="1.100"/><path d="M7.200 10.200L10.600 8.600" stroke="#fff" stroke-width="1.200" stroke-linecap="round"/></svg>
<div class="abs" style="left:640px;top:38px;width:48px;height:2px;background:#8cc4f2"></div>
<svg class="abs" style="left:1115px;top:8px" width="100" height="24" viewBox="0 0 100 24" fill="none" stroke="#fff" stroke-width="1.200"><path d="M6 15l5.500-5.500 5.500 5.500"/><rect x="29.500" y="8.500" width="12" height="7"/><rect x="31" y="10" width="6" height="4" fill="#fff" stroke="none"/><path d="M42.500 10.500v3"/><path d="M61.500 17.800A4 4 0 0 1 65.500 13.800" stroke="#c8ccd4"/><path d="M58 17.800A7.500 7.500 0 0 1 65.500 10.300" stroke="#c8ccd4"/><path d="M54.500 17.800A11 11 0 0 1 65.500 6.800" stroke="#c8ccd4"/><circle cx="65.500" cy="17.300" r="1.300" fill="#fff" stroke="none"/><path d="M77 10.500h2.500l3-3v9.500l-3-3h-2.500z"/><path d="M85 9.500q2 2.500 0 5.500M87.500 7.500q3.500 4.500 0 9.500M90 6q4.500 6 0 12.500" /></svg>
<div class="abs" style="left:1218px;top:14px;font-size:11px;color:#fff">РУС</div>
<div class="abs" style="left:1253px;top:2px;width:52px;text-align:center;font-size:11.500px;color:#fff;line-height:18px;letter-spacing:-0.45px">22:57<br>20.01.2021</div>
<svg class="abs" style="left:1322px;top:9px" width="28" height="28" viewBox="0 0 28 28"><path d="M3.500 2.500h15v11h-11l-4 3.500z" fill="#fff"/><path d="M6 5.500h10M6 8h10M6 10.500h10" stroke="#1a2c45" stroke-width=".9"/><circle cx="18.500" cy="18" r="7.500" fill="#2b2b33" stroke="#555" stroke-width="1"/><text x="18.500" y="21.500" font-family="Liberation Sans, sans-serif" font-size="10" font-weight="bold" fill="#fff" text-anchor="middle">3</text></svg>
<div class="abs" style="left:1361px;top:0;width:1px;height:40px;background:#6b7888"></div>
</div>
</body></html>
